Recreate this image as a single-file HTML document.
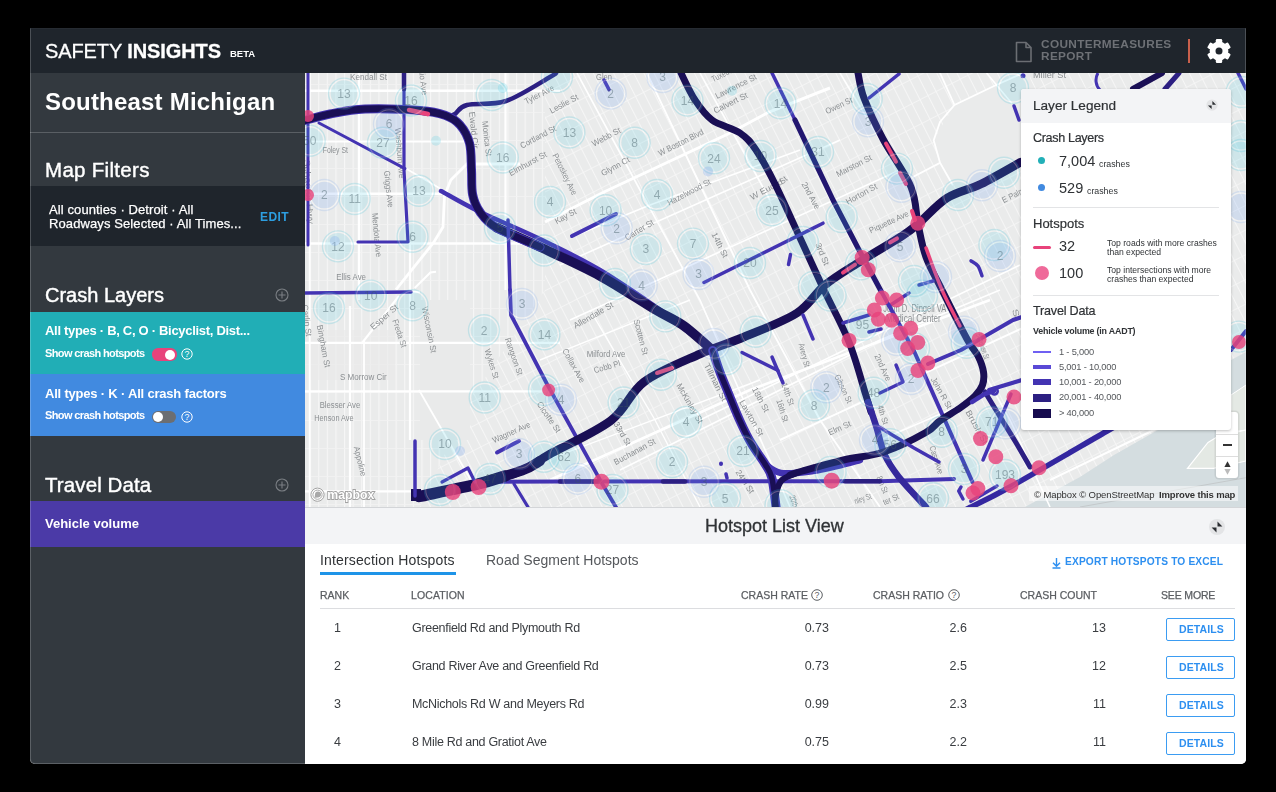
<!DOCTYPE html>
<html><head><meta charset="utf-8">
<style>
*{margin:0;padding:0;box-sizing:border-box}
html,body{width:1276px;height:792px;background:#000;overflow:hidden;font-family:"Liberation Sans",sans-serif}
.abs{position:absolute}
#win{position:absolute;left:30px;top:28px;width:1216px;height:736px;background:#fff;border-radius:0 0 5px 5px;overflow:hidden}
#hdr{position:absolute;left:0;top:0;width:1216px;height:45px;background:#1f252c}
#side{position:absolute;left:0;top:45px;width:275px;height:691px;background:#33393f}
#map{position:absolute;left:275px;top:45px;width:941px;height:434px;background:#e9eaea;overflow:hidden}
#list{position:absolute;left:275px;top:479px;width:941px;height:257px;background:#fff}
.t{position:absolute;white-space:nowrap;line-height:1;will-change:transform}
</style></head><body>
<div id="win">
  <div id="hdr">
    <div class="t" style="left:15px;top:13px;font-size:20px;color:#fff;letter-spacing:-0.1px;-webkit-text-stroke:0.3px #fff">SAFETY <b>INSIGHTS</b></div>
    <div class="t" style="left:200px;top:21px;font-size:9.5px;color:#fff;font-weight:bold">BETA</div>
    <svg class="abs" style="left:985px;top:13px" width="18" height="22" viewBox="0 0 18 22"><path d="M1.5 1.5H11L16 6.5V20.5H1.5Z M11 1.5V6.5H16" fill="none" stroke="#6b6e73" stroke-width="1.6" stroke-linejoin="round"/></svg>
    <div class="t" style="left:1010.5px;top:10px;font-size:11.8px;color:#6e7176;line-height:12px;letter-spacing:0.36px;font-weight:bold">COUNTERMEASURES<br>REPORT</div>
    <div class="abs" style="left:1158px;top:11px;width:1.5px;height:24px;background:#c9604c"></div>
    <svg class="abs" style="left:1173.6px;top:11px" width="30" height="26" viewBox="0 0 30 26"><g transform="translate(15 12)" fill="#fff"><circle r="9.4"/><rect x="-3.2" y="-12" width="6.4" height="24" rx="1.2"/><rect x="-3.2" y="-12" width="6.4" height="24" rx="1.2" transform="rotate(60)"/><rect x="-3.2" y="-12" width="6.4" height="24" rx="1.2" transform="rotate(120)"/><circle r="3.5" fill="#1f252c"/></g></svg>
  </div>
  <div id="side">
    <div class="t" style="left:15px;top:17px;font-size:24px;color:#fff;font-weight:bold;letter-spacing:0.2px">Southeast Michigan</div>
    <div class="abs" style="left:0;top:59px;width:275px;height:1px;background:#5a5f64"></div>
    <div class="t" style="left:15px;top:86.5px;font-size:20.5px;color:#fff;letter-spacing:0.3px;-webkit-text-stroke:0.4px #fff">Map Filters</div>
    <div class="abs" style="left:0;top:113px;width:275px;height:60px;background:#1f252c"></div>
    <div class="t" style="left:19px;top:130px;font-size:13px;color:#fff;line-height:14px;letter-spacing:0.1px;-webkit-text-stroke:0.25px #fff">All counties · Detroit · All<br>Roadways Selected · All Times...</div>
    <div class="t" style="left:230px;top:138px;font-size:12px;color:#2d9ee0;font-weight:bold;letter-spacing:0.4px">EDIT</div>

    <div class="t" style="left:15px;top:212px;font-size:20px;color:#fff;letter-spacing:0px;-webkit-text-stroke:0.4px #fff">Crash Layers</div>
    <svg class="abs" style="left:245px;top:215px" width="14" height="14" viewBox="0 0 14 14"><circle cx="7" cy="7" r="6" fill="none" stroke="#7b7f84" stroke-width="1.1"/><path d="M7 3.5V10.5M3.5 7H10.5" stroke="#7b7f84" stroke-width="1.1"/></svg>

    <div class="abs" style="left:0;top:239px;width:275px;height:62px;background:#21aeb6"></div>
    <div class="t" style="left:15px;top:251px;font-size:13px;color:#fff;font-weight:bold;letter-spacing:-0.3px">All types · B, C, O · Bicyclist, Dist...</div>
    <div class="t" style="left:15px;top:275px;font-size:11px;color:#fff;font-weight:bold;letter-spacing:-0.62px">Show crash hotspots</div>
    <div class="abs" style="left:122.3px;top:275.3px;width:24.5px;height:12.4px;border-radius:6.2px;background:#e8437b"></div>
    <div class="abs" style="left:135.3px;top:276.5px;width:10px;height:10px;border-radius:5px;background:#fff"></div>
    <svg class="abs" style="left:151px;top:275px" width="12" height="12" viewBox="0 0 12 12"><circle cx="6" cy="6" r="5.2" fill="none" stroke="#fff" stroke-width="1"/><text x="6" y="9.1" font-size="8.8" text-anchor="middle" fill="#fff" font-family="Liberation Sans">?</text></svg>

    <div class="abs" style="left:0;top:301px;width:275px;height:62px;background:#418ae0"></div>
    <div class="t" style="left:15px;top:314px;font-size:13px;color:#fff;font-weight:bold;letter-spacing:-0.2px">All types · K · All crash factors</div>
    <div class="t" style="left:15px;top:337px;font-size:11px;color:#fff;font-weight:bold;letter-spacing:-0.62px">Show crash hotspots</div>
    <div class="abs" style="left:122px;top:338px;width:24px;height:12px;border-radius:6px;background:#6c6e71"></div>
    <div class="abs" style="left:123px;top:339px;width:10px;height:10px;border-radius:5px;background:#fff"></div>
    <svg class="abs" style="left:151px;top:338px" width="12" height="12" viewBox="0 0 12 12"><circle cx="6" cy="6" r="5.2" fill="none" stroke="#fff" stroke-width="1"/><text x="6" y="9.1" font-size="8.8" text-anchor="middle" fill="#fff" font-family="Liberation Sans">?</text></svg>

    <div class="t" style="left:15px;top:402px;font-size:20.5px;color:#fff;letter-spacing:0.1px;-webkit-text-stroke:0.4px #fff">Travel Data</div>
    <svg class="abs" style="left:245px;top:405px" width="14" height="14" viewBox="0 0 14 14"><circle cx="7" cy="7" r="6" fill="none" stroke="#7b7f84" stroke-width="1.1"/><path d="M7 3.5V10.5M3.5 7H10.5" stroke="#7b7f84" stroke-width="1.1"/></svg>
    <div class="abs" style="left:0;top:428px;width:275px;height:46px;background:#4b3aa7"></div>
    <div class="t" style="left:15px;top:444px;font-size:13px;color:#fff;font-weight:bold">Vehicle volume</div>
  </div>
  <div id="map">
    <svg id="mapsvg" class="abs" style="left:0;top:0;will-change:transform" width="941" height="434" viewBox="305 73 941 434">
<g clip-path="url(#mc)">
<rect x="305" y="73" width="941" height="434" fill="#eaebeb"/>
<defs>
<pattern id="g1" width="8.6" height="28" patternUnits="userSpaceOnUse"><path d="M0.5 0V28" stroke="#f6f6f6" stroke-width="1.1"/><path d="M0 0.5H8.6" stroke="#f3f3f3" stroke-width="0.8"/></pattern>
<pattern id="g2" width="9" height="22" patternUnits="userSpaceOnUse" patternTransform="rotate(-27)"><path d="M0.5 0V22" stroke="#f6f6f6" stroke-width="1"/><path d="M0 0.5H9" stroke="#f6f6f6" stroke-width="0.8"/></pattern>
<pattern id="g3" width="20" height="9" patternUnits="userSpaceOnUse" patternTransform="rotate(-27)"><path d="M0 0.5H20" stroke="#f6f6f6" stroke-width="1"/><path d="M0.5 0V9" stroke="#f6f6f6" stroke-width="0.8"/></pattern>
<clipPath id="mc"><rect x="305" y="73" width="941" height="434"/></clipPath>
</defs>
<path d="M305 73 L545 73 L545 290 L470 400 L420 507 L305 507 Z" fill="url(#g1)"/>
<path d="M545 73 L1246 73 L1246 507 L420 507 L470 400 L545 290 Z" fill="url(#g2)"/>
<path d="M420 300 L470 300 L470 440 L420 440 Z" fill="#e9eaea"/>
<path d="M954.5 105 L994.6 85.8 L1030 70 L1030 165 L985 185 L952.9 185.2 L940 162.7 L933.7 140.3 Z" fill="#eaebeb"/>
<path d="M305 330 L395 330 L395 380 L305 380 Z" fill="#e9eaea" opacity="0.6"/>
<path d="M1025 507 L1080 477 L1114 455 L1158 430 L1175 420 L1231 420 L1231 360 L1246 352 L1246 507 Z" fill="#d4dde0"/>
<path d="M1231 395 L1246 385 L1246 430 L1231 432 Z" fill="#e4e9e4" stroke="#fff" stroke-width="1"/>
<path d="M1187.5 468.4 L1208 442.5 L1217 437 L1246 430 L1246 461 L1213.4 468.4 Z" fill="#e4e9e4" stroke="#fff" stroke-width="1.2"/>
<path d="M1080 507 L1246 477.7" stroke="#c4c9cb" stroke-width="1"/>
<path d="M305.0 90.8 L560.0 90.8" stroke="#ffffff" stroke-width="2.4" fill="none"/>
<path d="M305.0 141.7 L470.0 141.7" stroke="#ffffff" stroke-width="1.8" fill="none"/>
<path d="M305.0 193.8 L445.0 193.8" stroke="#ffffff" stroke-width="2.6" fill="none"/>
<path d="M305.0 243.5 L555.0 243.5" stroke="#ffffff" stroke-width="2.6" fill="none"/>
<path d="M305.0 292.0 L420.0 292.0" stroke="#ffffff" stroke-width="2.4" fill="none"/>
<path d="M305.0 342.8 L560.0 342.8" stroke="#ffffff" stroke-width="2.2" fill="none"/>
<path d="M305.0 391.4 L560.0 391.4" stroke="#ffffff" stroke-width="2.4" fill="none"/>
<path d="M305.0 491.4 L420.0 491.4" stroke="#ffffff" stroke-width="2.2" fill="none"/>
<path d="M309.7 73.0 L309.7 507.0" stroke="#ffffff" stroke-width="1.8" fill="none"/>
<path d="M359.0 73.0 L359.0 300.0" stroke="#ffffff" stroke-width="2.4" fill="none"/>
<path d="M350.0 306.0 L350.0 507.0" stroke="#ffffff" stroke-width="2.2" fill="none"/>
<path d="M364.0 340.0 L364.0 507.0" stroke="#ffffff" stroke-width="1.8" fill="none"/>
<path d="M410.0 242.0 L410.0 440.0" stroke="#ffffff" stroke-width="2.2" fill="none"/>
<path d="M505.5 73.0 L505.5 290.0" stroke="#ffffff" stroke-width="2.2" fill="none"/>
<path d="M419.0 390.0 L472.0 482.0" stroke="#ffffff" stroke-width="1.8" fill="none"/>
<path d="M362.0 343.0 L399.0 296.0" stroke="#ffffff" stroke-width="2.2" fill="none"/>
<path d="M396.0 289.7 L433.5 242.7 L443.0 227.0 L444.5 195.7 L450.8 180.0 L467.0 164.0 L520.0 164.0" stroke="#ffffff" stroke-width="2.8" fill="none"/>
<path d="M414.7 288.0 L430.4 272.5 L436.0 271.7" stroke="#ffffff" stroke-width="2" fill="none"/>
<path d="M320.0 123.0 L405.0 168.0 L441.0 189.0 L470.0 206.0" stroke="#ffffff" stroke-width="1.8" fill="none"/>
<path d="M545.0 222.0 L604.0 192.0 L728.0 134.0 L769.0 112.0 L830.0 88.0" stroke="#ffffff" stroke-width="3" fill="none"/>
<path d="M572.0 237.0 L650.0 205.0 L800.0 150.0" stroke="#ffffff" stroke-width="1.8" fill="none"/>
<path d="M560.0 265.0 L840.0 140.0" stroke="#ffffff" stroke-width="1.6" fill="none"/>
<path d="M570.0 320.0 L900.0 170.0" stroke="#ffffff" stroke-width="1.6" fill="none"/>
<path d="M550.0 480.0 L750.0 390.0 L990.0 300.0" stroke="#ffffff" stroke-width="2.6" fill="none"/>
<path d="M620.0 470.0 L880.0 340.0 L1000.0 290.0" stroke="#ffffff" stroke-width="1.6" fill="none"/>
<path d="M700.0 420.0 L1020.0 265.0" stroke="#ffffff" stroke-width="1.6" fill="none"/>
<path d="M780.0 440.0 L1040.0 320.0" stroke="#ffffff" stroke-width="2" fill="none"/>
<path d="M880.0 440.0 L1020.0 380.0" stroke="#ffffff" stroke-width="1.6" fill="none"/>
<path d="M647.0 73.0 L750.0 290.0 L820.0 420.0 L880.0 507.0" stroke="#ffffff" stroke-width="1.8" fill="none"/>
<path d="M577.0 73.0 L640.0 190.0 L700.0 300.0 L790.0 507.0" stroke="#ffffff" stroke-width="1.6" fill="none"/>
<path d="M700.0 73.0 L770.0 200.0" stroke="#ffffff" stroke-width="1.6" fill="none"/>
<path d="M840.0 73.0 L880.0 140.0" stroke="#ffffff" stroke-width="1.6" fill="none"/>
<path d="M952.9 185.2 L940.0 162.7 L933.7 140.3 L940.0 122.0 L954.5 105.0 L994.6 85.8 L1030.0 70.0" stroke="#ffffff" stroke-width="1.8" fill="none"/>
<path d="M940.0 73.0 L954.5 105.0" stroke="#ffffff" stroke-width="1.8" fill="none"/>
<path d="M986.5 73.0 L1012.0 103.4" stroke="#ffffff" stroke-width="1.6" fill="none"/>
<path d="M940.0 162.7 L912.8 177.0" stroke="#ffffff" stroke-width="1.6" fill="none"/>
<path d="M960.0 330.0 L1010.0 420.0 L1050.0 507.0" stroke="#ffffff" stroke-width="1.6" fill="none"/>
<path d="M1050.0 480.0 L1158.0 428.0" stroke="#ffffff" stroke-width="2" fill="none"/>
<path d="M590.0 310.0 L655.0 420.0 L700.0 507.0" stroke="#ffffff" stroke-width="1.4" fill="none"/>
<path d="M540.0 360.0 L690.0 300.0" stroke="#ffffff" stroke-width="1.4" fill="none"/>
<path d="M520.0 470.0 L760.0 380.0" stroke="#ffffff" stroke-width="1.4" fill="none"/>
<text x="350.0" y="80.4" font-size="8.5" fill="#8b8f92" font-family="Liberation Sans" textLength="37.0" lengthAdjust="spacingAndGlyphs">Kendall St</text>
<text x="322.7" y="153.3" font-size="8.5" fill="#8b8f92" font-family="Liberation Sans" textLength="25.3" lengthAdjust="spacingAndGlyphs">Foley St</text>
<text x="336.3" y="280.0" font-size="8.5" fill="#8b8f92" font-family="Liberation Sans" textLength="29.7" lengthAdjust="spacingAndGlyphs">Ellis Ave</text>
<text x="1033.0" y="78.0" font-size="8.5" fill="#8b8f92" font-family="Liberation Sans" textLength="33.0" lengthAdjust="spacingAndGlyphs">Miller St</text>
<text x="398.0" y="128.0" font-size="8.5" fill="#8b8f92" font-family="Liberation Sans" dominant-baseline="central" textLength="50.2" lengthAdjust="spacingAndGlyphs" transform="rotate(85.4 398.0 128.0)">Washburn Ave</text>
<text x="387.0" y="170.6" font-size="8.5" fill="#8b8f92" font-family="Liberation Sans" dominant-baseline="central" textLength="37.0" lengthAdjust="spacingAndGlyphs" transform="rotate(83.8 387.0 170.6)">Griggs Ave</text>
<text x="375.0" y="213.0" font-size="8.5" fill="#8b8f92" font-family="Liberation Sans" dominant-baseline="central" textLength="44.2" lengthAdjust="spacingAndGlyphs" transform="rotate(84.8 375.0 213.0)">Mendota Ave</text>
<text x="421.0" y="63.0" font-size="8.5" fill="#8b8f92" font-family="Liberation Sans" dominant-baseline="central" textLength="32.2" lengthAdjust="spacingAndGlyphs" transform="rotate(82.9 421.0 63.0)">Ohio Ave</text>
<text x="472.0" y="111.7" font-size="8.5" fill="#8b8f92" font-family="Liberation Sans" dominant-baseline="central" textLength="37.0" lengthAdjust="spacingAndGlyphs" transform="rotate(83.8 472.0 111.7)">Ewald Cir</text>
<text x="485.0" y="121.0" font-size="8.5" fill="#8b8f92" font-family="Liberation Sans" dominant-baseline="central" textLength="35.2" lengthAdjust="spacingAndGlyphs" transform="rotate(83.5 485.0 121.0)">Monica St</text>
<text x="307.0" y="159.5" font-size="8.5" fill="#8b8f92" font-family="Liberation Sans" dominant-baseline="central" textLength="64.6" lengthAdjust="spacingAndGlyphs" transform="rotate(86.5 307.0 159.5)">Schaefer Hwy</text>
<text x="525.0" y="101.8" font-size="8.5" fill="#8b8f92" font-family="Liberation Sans" dominant-baseline="central" textLength="32.2" lengthAdjust="spacingAndGlyphs" transform="rotate(-27.2 525.0 101.8)">Tyler Ave</text>
<text x="550.0" y="111.0" font-size="8.5" fill="#8b8f92" font-family="Liberation Sans" dominant-baseline="central" textLength="31.3" lengthAdjust="spacingAndGlyphs" transform="rotate(-28.0 550.0 111.0)">Leslie St</text>
<text x="520.5" y="146.0" font-size="8.5" fill="#8b8f92" font-family="Liberation Sans" dominant-baseline="central" textLength="39.5" lengthAdjust="spacingAndGlyphs" transform="rotate(-27.9 520.5 146.0)">Cortland St</text>
<text x="509.4" y="173.5" font-size="8.5" fill="#8b8f92" font-family="Liberation Sans" dominant-baseline="central" textLength="41.7" lengthAdjust="spacingAndGlyphs" transform="rotate(-28.7 509.4 173.5)">Elmhurst St</text>
<text x="555.0" y="154.0" font-size="8.5" fill="#8b8f92" font-family="Liberation Sans" dominant-baseline="central" textLength="45.2" lengthAdjust="spacingAndGlyphs" transform="rotate(63.7 555.0 154.0)">Petoskey Ave</text>
<text x="592.3" y="144.2" font-size="8.5" fill="#8b8f92" font-family="Liberation Sans" dominant-baseline="central" textLength="31.4" lengthAdjust="spacingAndGlyphs" transform="rotate(-28.0 592.3 144.2)">Webb St</text>
<text x="601.5" y="173.5" font-size="8.5" fill="#8b8f92" font-family="Liberation Sans" dominant-baseline="central" textLength="31.1" lengthAdjust="spacingAndGlyphs" transform="rotate(-28.0 601.5 173.5)">Glynn Ct</text>
<text x="658.6" y="153.5" font-size="8.5" fill="#8b8f92" font-family="Liberation Sans" dominant-baseline="central" textLength="49.5" lengthAdjust="spacingAndGlyphs" transform="rotate(-26.7 658.6 153.5)">W Boston Blvd</text>
<text x="667.8" y="203.1" font-size="8.5" fill="#8b8f92" font-family="Liberation Sans" dominant-baseline="central" textLength="47.6" lengthAdjust="spacingAndGlyphs" transform="rotate(-27.6 667.8 203.1)">Hazelwood St</text>
<text x="555.4" y="221.5" font-size="8.5" fill="#8b8f92" font-family="Liberation Sans" dominant-baseline="central" textLength="23.1" lengthAdjust="spacingAndGlyphs" transform="rotate(-28.5 555.4 221.5)">Kay St</text>
<text x="625.4" y="238.1" font-size="8.5" fill="#8b8f92" font-family="Liberation Sans" dominant-baseline="central" textLength="32.2" lengthAdjust="spacingAndGlyphs" transform="rotate(-31.0 625.4 238.1)">Carter St</text>
<text x="714.0" y="233.0" font-size="8.5" fill="#8b8f92" font-family="Liberation Sans" dominant-baseline="central" textLength="26.8" lengthAdjust="spacingAndGlyphs" transform="rotate(63.4 714.0 233.0)">14th St</text>
<text x="750.7" y="197.5" font-size="8.5" fill="#8b8f92" font-family="Liberation Sans" dominant-baseline="central" textLength="35.4" lengthAdjust="spacingAndGlyphs" transform="rotate(-27.8 750.7 197.5)">W Euclid</text>
<text x="715.7" y="96.3" font-size="8.5" fill="#8b8f92" font-family="Liberation Sans" dominant-baseline="central" textLength="45.1" lengthAdjust="spacingAndGlyphs" transform="rotate(-26.7 715.7 96.3)">Lawrence St</text>
<text x="713.8" y="111.0" font-size="8.5" fill="#8b8f92" font-family="Liberation Sans" dominant-baseline="central" textLength="37.1" lengthAdjust="spacingAndGlyphs" transform="rotate(-26.4 713.8 111.0)">Calvert St</text>
<text x="712.0" y="79.5" font-size="8.5" fill="#8b8f92" font-family="Liberation Sans" dominant-baseline="central" textLength="22.4" lengthAdjust="spacingAndGlyphs" transform="rotate(-26.6 712.0 79.5)">Tuxedo</text>
<text x="596.0" y="80.4" font-size="8.5" fill="#8b8f92" font-family="Liberation Sans" textLength="16.0" lengthAdjust="spacingAndGlyphs">Glen</text>
<text x="825.7" y="111.5" font-size="8.5" fill="#8b8f92" font-family="Liberation Sans" dominant-baseline="central" textLength="28.8" lengthAdjust="spacingAndGlyphs" transform="rotate(-25.1 825.7 111.5)">Owen St</text>
<text x="836.7" y="174.5" font-size="8.5" fill="#8b8f92" font-family="Liberation Sans" dominant-baseline="central" textLength="38.6" lengthAdjust="spacingAndGlyphs" transform="rotate(-27.3 836.7 174.5)">Marston St</text>
<text x="846.3" y="202.1" font-size="8.5" fill="#8b8f92" font-family="Liberation Sans" dominant-baseline="central" textLength="34.4" lengthAdjust="spacingAndGlyphs" transform="rotate(-28.9 846.3 202.1)">Horton St</text>
<text x="869.6" y="230.9" font-size="8.5" fill="#8b8f92" font-family="Liberation Sans" dominant-baseline="central" textLength="42.4" lengthAdjust="spacingAndGlyphs" transform="rotate(-25.0 869.6 230.9)">Piquette Ave</text>
<text x="1002.5" y="200.5" font-size="8.5" fill="#8b8f92" font-family="Liberation Sans" dominant-baseline="central" textLength="30.9" lengthAdjust="spacingAndGlyphs" transform="rotate(-27.0 1002.5 200.5)">E Palmer</text>
<text x="804.0" y="182.6" font-size="8.5" fill="#8b8f92" font-family="Liberation Sans" dominant-baseline="central" textLength="29.6" lengthAdjust="spacingAndGlyphs" transform="rotate(61.8 804.0 182.6)">2nd Ave</text>
<text x="818.0" y="243.0" font-size="8.5" fill="#8b8f92" font-family="Liberation Sans" dominant-baseline="central" textLength="23.8" lengthAdjust="spacingAndGlyphs" transform="rotate(67.8 818.0 243.0)">3rd St</text>
<text x="801.3" y="343.5" font-size="8.5" fill="#8b8f92" font-family="Liberation Sans" dominant-baseline="central" textLength="24.1" lengthAdjust="spacingAndGlyphs" transform="rotate(74.9 801.3 343.5)">Avery St</text>
<text x="837.0" y="375.0" font-size="8.5" fill="#8b8f92" font-family="Liberation Sans" dominant-baseline="central" textLength="30.3" lengthAdjust="spacingAndGlyphs" transform="rotate(64.6 837.0 375.0)">Gibson St</text>
<text x="877.0" y="354.4" font-size="8.5" fill="#8b8f92" font-family="Liberation Sans" dominant-baseline="central" textLength="28.7" lengthAdjust="spacingAndGlyphs" transform="rotate(65.3 877.0 354.4)">2nd Ave</text>
<text x="880.0" y="405.0" font-size="8.5" fill="#8b8f92" font-family="Liberation Sans" dominant-baseline="central" textLength="20.2" lengthAdjust="spacingAndGlyphs" transform="rotate(72.7 880.0 405.0)">4th St</text>
<text x="828.5" y="432.8" font-size="8.5" fill="#8b8f92" font-family="Liberation Sans" dominant-baseline="central" textLength="23.9" lengthAdjust="spacingAndGlyphs" transform="rotate(-23.7 828.5 432.8)">Elm St</text>
<text x="933.0" y="377.7" font-size="8.5" fill="#8b8f92" font-family="Liberation Sans" dominant-baseline="central" textLength="34.7" lengthAdjust="spacingAndGlyphs" transform="rotate(60.6 933.0 377.7)">John R St</text>
<text x="968.0" y="410.6" font-size="8.5" fill="#8b8f92" font-family="Liberation Sans" dominant-baseline="central" textLength="37.5" lengthAdjust="spacingAndGlyphs" transform="rotate(61.3 968.0 410.6)">Brush St</text>
<text x="932.0" y="446.0" font-size="8.5" fill="#8b8f92" font-family="Liberation Sans" dominant-baseline="central" textLength="29.1" lengthAdjust="spacingAndGlyphs" transform="rotate(72.0 932.0 446.0)">Cass Ave</text>
<text x="879.0" y="476.4" font-size="8.5" fill="#8b8f92" font-family="Liberation Sans" dominant-baseline="central" textLength="17.8" lengthAdjust="spacingAndGlyphs" transform="rotate(66.9 879.0 476.4)">8th St</text>
<text x="883.3" y="312.0" font-size="10" fill="#8b8f92" font-family="Liberation Sans" textLength="63.0" lengthAdjust="spacingAndGlyphs">John D. Dingell VA</text>
<text x="886.0" y="322.3" font-size="10" fill="#8b8f92" font-family="Liberation Sans" textLength="54.8" lengthAdjust="spacingAndGlyphs">Medical Center</text>
<text x="779.0" y="399.6" font-size="8.5" fill="#8b8f92" font-family="Liberation Sans" dominant-baseline="central" textLength="23.1" lengthAdjust="spacingAndGlyphs" transform="rotate(72.3 779.0 399.6)">16th St</text>
<text x="784.0" y="383.2" font-size="8.5" fill="#8b8f92" font-family="Liberation Sans" dominant-baseline="central" textLength="23.2" lengthAdjust="spacingAndGlyphs" transform="rotate(69.8 784.0 383.2)">14th St</text>
<text x="1015.0" y="309.0" font-size="8.5" fill="#8b8f92" font-family="Liberation Sans" dominant-baseline="central" textLength="11.4" lengthAdjust="spacingAndGlyphs" transform="rotate(74.7 1015.0 309.0)">St</text>
<text x="979.0" y="333.9" font-size="8.5" fill="#8b8f92" font-family="Liberation Sans" dominant-baseline="central" textLength="25.9" lengthAdjust="spacingAndGlyphs" transform="rotate(72.0 979.0 333.9)">Beaubien St</text>
<text x="854.5" y="501.3" font-size="8.5" fill="#8b8f92" font-family="Liberation Sans" dominant-baseline="central" textLength="17.4" lengthAdjust="spacingAndGlyphs" transform="rotate(-18.4 854.5 501.3)">nley St</text>
<text x="883.3" y="502.5" font-size="8.5" fill="#8b8f92" font-family="Liberation Sans" dominant-baseline="central" textLength="16.5" lengthAdjust="spacingAndGlyphs" transform="rotate(-23.9 883.3 502.5)">ter St</text>
<text x="792.0" y="495.6" font-size="8.5" fill="#8b8f92" font-family="Liberation Sans" dominant-baseline="central" textLength="12.1" lengthAdjust="spacingAndGlyphs" transform="rotate(70.7 792.0 495.6)">20th</text>
<text x="780.5" y="182.5" font-size="8.5" fill="#8b8f92" font-family="Liberation Sans" dominant-baseline="central" textLength="7.4" lengthAdjust="spacingAndGlyphs" transform="rotate(-42.3 780.5 182.5)">St</text>
<text x="305.0" y="304.7" font-size="8.5" fill="#8b8f92" font-family="Liberation Sans" dominant-baseline="central" textLength="31.6" lengthAdjust="spacingAndGlyphs" transform="rotate(82.7 305.0 304.7)">Carlin St</text>
<text x="319.7" y="325.0" font-size="8.5" fill="#8b8f92" font-family="Liberation Sans" dominant-baseline="central" textLength="43.1" lengthAdjust="spacingAndGlyphs" transform="rotate(79.2 319.7 325.0)">Bingham St</text>
<text x="371.3" y="328.0" font-size="8.5" fill="#8b8f92" font-family="Liberation Sans" dominant-baseline="central" textLength="33.9" lengthAdjust="spacingAndGlyphs" transform="rotate(-40.7 371.3 328.0)">Esper St</text>
<text x="395.2" y="319.5" font-size="8.5" fill="#8b8f92" font-family="Liberation Sans" dominant-baseline="central" textLength="29.0" lengthAdjust="spacingAndGlyphs" transform="rotate(71.5 395.2 319.5)">Freda St</text>
<text x="424.7" y="306.6" font-size="8.5" fill="#8b8f92" font-family="Liberation Sans" dominant-baseline="central" textLength="46.9" lengthAdjust="spacingAndGlyphs" transform="rotate(78.6 424.7 306.6)">Wisconsin St</text>
<text x="487.3" y="349.0" font-size="8.5" fill="#8b8f92" font-family="Liberation Sans" dominant-baseline="central" textLength="30.8" lengthAdjust="spacingAndGlyphs" transform="rotate(72.6 487.3 349.0)">Wykes St</text>
<text x="507.6" y="337.9" font-size="8.5" fill="#8b8f92" font-family="Liberation Sans" dominant-baseline="central" textLength="39.0" lengthAdjust="spacingAndGlyphs" transform="rotate(70.7 507.6 337.9)">Rangoon St</text>
<text x="573.9" y="326.2" font-size="8.5" fill="#8b8f92" font-family="Liberation Sans" dominant-baseline="central" textLength="44.5" lengthAdjust="spacingAndGlyphs" transform="rotate(-29.8 573.9 326.2)">Allendale St</text>
<text x="636.5" y="319.5" font-size="8.5" fill="#8b8f92" font-family="Liberation Sans" dominant-baseline="central" textLength="36.2" lengthAdjust="spacingAndGlyphs" transform="rotate(75.3 636.5 319.5)">Scotten St</text>
<text x="564.7" y="349.0" font-size="8.5" fill="#8b8f92" font-family="Liberation Sans" dominant-baseline="central" textLength="37.7" lengthAdjust="spacingAndGlyphs" transform="rotate(61.0 564.7 349.0)">Collax Ave</text>
<text x="586.8" y="357.4" font-size="8.5" fill="#8b8f92" font-family="Liberation Sans" textLength="38.6" lengthAdjust="spacingAndGlyphs">Milford Ave</text>
<text x="594.0" y="370.4" font-size="8.5" fill="#8b8f92" font-family="Liberation Sans" dominant-baseline="central" textLength="27.0" lengthAdjust="spacingAndGlyphs" transform="rotate(-15.9 594.0 370.4)">Cobb Pl</text>
<text x="340.0" y="380.2" font-size="8.5" fill="#8b8f92" font-family="Liberation Sans" textLength="46.8" lengthAdjust="spacingAndGlyphs">S Morrow Cir</text>
<text x="319.7" y="407.9" font-size="8.5" fill="#8b8f92" font-family="Liberation Sans" textLength="40.5" lengthAdjust="spacingAndGlyphs">Blesser Ave</text>
<text x="314.2" y="420.8" font-size="8.5" fill="#8b8f92" font-family="Liberation Sans" textLength="39.4" lengthAdjust="spacingAndGlyphs">Henson Ave</text>
<text x="356.6" y="446.5" font-size="8.5" fill="#8b8f92" font-family="Liberation Sans" dominant-baseline="central" textLength="30.4" lengthAdjust="spacingAndGlyphs" transform="rotate(75.9 356.6 446.5)">Appoline</text>
<text x="492.8" y="440.4" font-size="8.5" fill="#8b8f92" font-family="Liberation Sans" dominant-baseline="central" textLength="40.5" lengthAdjust="spacingAndGlyphs" transform="rotate(-24.2 492.8 440.4)">Wagner Ave</text>
<text x="538.9" y="402.3" font-size="8.5" fill="#8b8f92" font-family="Liberation Sans" dominant-baseline="central" textLength="35.7" lengthAdjust="spacingAndGlyphs" transform="rotate(55.7 538.9 402.3)">Cicotte St</text>
<text x="678.8" y="383.9" font-size="8.5" fill="#8b8f92" font-family="Liberation Sans" dominant-baseline="central" textLength="44.6" lengthAdjust="spacingAndGlyphs" transform="rotate(60.2 678.8 383.9)">McKinley St</text>
<text x="616.2" y="422.6" font-size="8.5" fill="#8b8f92" font-family="Liberation Sans" dominant-baseline="central" textLength="25.5" lengthAdjust="spacingAndGlyphs" transform="rotate(59.9 616.2 422.6)">33rd St</text>
<text x="614.4" y="462.5" font-size="8.5" fill="#8b8f92" font-family="Liberation Sans" dominant-baseline="central" textLength="46.1" lengthAdjust="spacingAndGlyphs" transform="rotate(-28.6 614.4 462.5)">Buchanan St</text>
<text x="706.5" y="363.7" font-size="8.5" fill="#8b8f92" font-family="Liberation Sans" dominant-baseline="central" textLength="41.2" lengthAdjust="spacingAndGlyphs" transform="rotate(63.3 706.5 363.7)">Tillman St</text>
<text x="741.5" y="400.5" font-size="8.5" fill="#8b8f92" font-family="Liberation Sans" dominant-baseline="central" textLength="40.4" lengthAdjust="spacingAndGlyphs" transform="rotate(60.0 741.5 400.5)">Lawton St</text>
<text x="754.4" y="387.6" font-size="8.5" fill="#8b8f92" font-family="Liberation Sans" dominant-baseline="central" textLength="27.1" lengthAdjust="spacingAndGlyphs" transform="rotate(61.8 754.4 387.6)">18th St</text>
<text x="737.8" y="470.5" font-size="8.5" fill="#8b8f92" font-family="Liberation Sans" dominant-baseline="central" textLength="26.5" lengthAdjust="spacingAndGlyphs" transform="rotate(56.4 737.8 470.5)">24th St</text>
<path d="M441.0 191.0 C447.2 194.3 461.5 203.0 478.0 211.0 C494.5 219.0 519.7 229.2 540.0 239.0 C560.3 248.8 579.2 257.7 600.0 270.0 C620.8 282.3 654.2 305.8 665.0 313.0" stroke="#4333b2" stroke-width="4.5" fill="none" stroke-linecap="round" stroke-linejoin="round"/>
<path d="M319.0 123.0 L405.0 168.6" stroke="#4333b2" stroke-width="3" fill="none" stroke-linecap="round" stroke-linejoin="round"/>
<path d="M496.5 227.7 C503.8 230.9 522.8 238.9 540.0 247.0 C557.2 255.1 581.0 265.7 600.0 276.0 C619.0 286.3 640.0 300.7 654.0 309.0 C668.0 317.3 674.2 319.1 684.0 326.0 C693.8 332.9 707.9 346.4 712.7 350.5" stroke="#1a0f55" stroke-width="9.5" fill="none" stroke-linecap="round" stroke-linejoin="round"/>
<path d="M447.0 117.0 C448.3 116.5 451.7 116.0 455.0 114.0 C458.3 112.0 458.5 107.2 467.0 105.0 C475.5 102.8 492.2 105.7 506.0 101.0 C519.8 96.3 541.7 81.7 550.0 77.0 C558.3 72.3 555.0 73.7 556.0 73.0" stroke="#2c1f82" stroke-width="4.5" fill="none" stroke-linecap="round" stroke-linejoin="round"/>
<path d="M409.0 110.0 L428.0 114.0" stroke="#e8437b" stroke-width="4.5" fill="none" stroke-linecap="round" stroke-linejoin="round"/>
<path d="M308.0 73.0 L308.0 245.0" stroke="#4333b2" stroke-width="3" fill="none" stroke-linecap="round" stroke-linejoin="round"/>
<path d="M404.0 73.0 L404.0 170.0 L408.0 242.0 L358.0 242.0" stroke="#4333b2" stroke-width="3.2" fill="none" stroke-linecap="round" stroke-linejoin="round"/>
<path d="M404.0 71.0 L404.0 89.0" stroke="#2c1f82" stroke-width="4.5" fill="none" stroke-linecap="round" stroke-linejoin="round"/>
<path d="M303.0 121.0 C307.5 119.8 319.7 116.0 330.0 114.0 C340.3 112.0 350.0 109.6 365.0 109.0 C380.0 108.4 406.7 109.5 420.0 110.6 C433.3 111.6 438.3 112.9 445.0 115.3 C451.7 117.7 455.9 120.3 460.0 125.0 C464.1 129.7 467.7 136.0 469.6 143.5 C471.5 151.0 471.0 161.5 471.5 170.0 C472.0 178.5 471.2 187.5 472.6 194.5 C474.0 201.5 476.0 206.5 480.0 212.0 C484.0 217.5 486.5 221.9 496.5 227.7 C506.5 233.5 532.8 243.8 540.0 247.0" stroke="#4333b2" stroke-width="9" fill="none" stroke-linecap="round" stroke-linejoin="round"/>
<path d="M303.0 121.0 C307.5 119.8 319.7 116.0 330.0 114.0 C340.3 112.0 350.0 109.6 365.0 109.0 C380.0 108.4 406.7 109.5 420.0 110.6 C433.3 111.6 438.3 112.9 445.0 115.3 C451.7 117.7 455.9 120.3 460.0 125.0 C464.1 129.7 467.7 136.0 469.6 143.5 C471.5 151.0 471.0 161.5 471.5 170.0 C472.0 178.5 471.2 187.5 472.6 194.5 C474.0 201.5 476.0 206.5 480.0 212.0 C484.0 217.5 486.5 221.9 496.5 227.7 C506.5 233.5 532.8 243.8 540.0 247.0" stroke="#1a0f55" stroke-width="7.2" fill="none" stroke-linecap="round" stroke-linejoin="round"/>
<path d="M409.0 110.0 L428.0 114.0" stroke="#e8437b" stroke-width="4.5" fill="none" stroke-linecap="round" stroke-linejoin="round"/>
<path d="M305.0 293.0 L411.0 292.0" stroke="#4333b2" stroke-width="3.5" fill="none" stroke-linecap="round" stroke-linejoin="round"/>
<path d="M508.0 220.0 L510.0 290.0" stroke="#4333b2" stroke-width="3.5" fill="none" stroke-linecap="round" stroke-linejoin="round"/>
<path d="M510.0 290.0 L511.0 315.0 L547.0 384.0 L601.0 481.7 L617.0 509.0" stroke="#4333b2" stroke-width="3.8" fill="none" stroke-linecap="round" stroke-linejoin="round"/>
<path d="M494.0 481.7 L767.0 481.2 L880.0 481.2 L954.0 479.0" stroke="#4333b2" stroke-width="4" fill="none" stroke-linecap="round" stroke-linejoin="round"/>
<path d="M560.0 481.5 L600.0 481.5" stroke="#2c1f82" stroke-width="4.5" fill="none" stroke-linecap="round" stroke-linejoin="round"/>
<path d="M663.0 481.5 L685.0 481.5" stroke="#2c1f82" stroke-width="4.5" fill="none" stroke-linecap="round" stroke-linejoin="round"/>
<path d="M845.0 481.2 L880.0 481.2" stroke="#2c1f82" stroke-width="4.5" fill="none" stroke-linecap="round" stroke-linejoin="round"/>
<path d="M417.0 497.0 C427.2 494.8 460.5 488.4 478.0 484.0 C495.5 479.6 510.0 475.5 522.0 470.5 C534.0 465.5 535.2 462.3 550.0 454.0 C564.8 445.7 595.3 432.5 611.0 420.5 C626.7 408.5 629.2 393.1 644.0 382.0 C658.8 370.9 683.3 361.5 700.0 354.0 C716.7 346.5 727.8 343.8 744.0 337.0 C760.2 330.2 783.5 321.7 797.0 313.0 C810.5 304.3 814.3 293.7 825.0 285.0 C835.7 276.3 848.2 269.2 861.0 261.0 C873.8 252.8 892.5 242.2 902.0 236.0 C911.5 229.8 910.5 230.3 918.0 224.0 C925.5 217.7 936.5 204.7 947.0 198.0 C957.5 191.3 968.7 190.0 981.0 184.0 C993.3 178.0 1014.3 165.7 1021.0 162.0" stroke="#1a0f55" stroke-width="8.5" fill="none" stroke-linecap="round" stroke-linejoin="round"/>
<path d="M419.0 496.5 C428.8 494.4 463.7 487.4 478.0 484.0 C492.3 480.6 500.5 477.3 505.0 476.0" stroke="#1a0f55" stroke-width="11.5" fill="none" stroke-linecap="round" stroke-linejoin="round"/>
<path d="M478.0 484.0 C485.3 481.8 511.7 474.3 522.0 470.5 C532.3 466.7 537.0 462.6 540.0 461.0" stroke="#1a0f55" stroke-width="10" fill="none" stroke-linecap="round" stroke-linejoin="round"/>
<rect x="411" y="489" width="10" height="12" fill="#1a0f55"/>
<path d="M415.0 441.0 L415.0 496.0" stroke="#4333b2" stroke-width="3.5" fill="none" stroke-linecap="round" stroke-linejoin="round"/>
<path d="M442.0 482.0 L468.0 468.0 L475.0 482.0" stroke="#4333b2" stroke-width="3.2" fill="none" stroke-linecap="round" stroke-linejoin="round"/>
<path d="M514.0 484.0 L528.0 507.0" stroke="#4333b2" stroke-width="3.2" fill="none" stroke-linecap="round" stroke-linejoin="round"/>
<path d="M497.0 452.5 L519.0 441.0" stroke="#4333b2" stroke-width="4" fill="none" stroke-linecap="round" stroke-linejoin="round"/>
<path d="M657.0 373.0 L672.0 368.0" stroke="#e8437b" stroke-width="4" fill="none" stroke-linecap="round" stroke-linejoin="round"/>
<path d="M765.0 464.0 C767.7 465.5 773.0 471.8 781.0 473.0 C789.0 474.2 803.7 472.2 813.0 471.0 C822.3 469.8 829.2 467.8 837.0 466.0 C844.8 464.2 856.2 461.0 860.0 460.0" stroke="#4333b2" stroke-width="6.5" fill="none" stroke-linecap="round" stroke-linejoin="round"/>
<path d="M712.7 350.5 C713.8 353.9 716.9 363.8 719.5 371.0 C722.1 378.2 725.2 385.3 728.6 393.6 C732.0 401.9 736.2 412.7 740.0 421.0 C743.8 429.3 747.2 436.4 751.4 443.6 C755.6 450.8 761.6 458.3 765.0 464.0 C768.4 469.7 769.9 470.1 771.8 477.7 C773.7 485.3 775.6 504.2 776.4 509.5" stroke="#4333b2" stroke-width="9" fill="none" stroke-linecap="round" stroke-linejoin="round"/>
<path d="M712.7 350.5 C713.8 353.9 716.9 363.8 719.5 371.0 C722.1 378.2 725.2 385.3 728.6 393.6 C732.0 401.9 736.2 412.7 740.0 421.0 C743.8 429.3 747.2 436.4 751.4 443.6 C755.6 450.8 761.6 458.3 765.0 464.0 C768.4 469.7 769.9 470.1 771.8 477.7 C773.7 485.3 775.6 504.2 776.4 509.5" stroke="#1a0f55" stroke-width="5.5" fill="none" stroke-linecap="round" stroke-linejoin="round"/>
<path d="M799.0 472.0 C796.2 473.3 785.8 476.3 782.0 480.0 C778.2 483.7 777.2 489.5 776.0 494.0 C774.8 498.5 775.2 504.8 775.0 507.0" stroke="#1a0f55" stroke-width="6" fill="none" stroke-linecap="round" stroke-linejoin="round"/>
<path d="M681.0 73.0 C683.3 77.5 689.8 92.2 695.0 100.0 C700.2 107.8 704.5 114.5 712.0 120.0 C719.5 125.5 732.7 128.0 740.0 133.0 C747.3 138.0 750.2 141.5 756.0 150.0 C761.8 158.5 767.5 169.0 775.0 184.0 C782.5 199.0 792.8 222.3 801.0 240.0 C809.2 257.7 816.0 273.0 824.0 290.0 C832.0 307.0 842.1 324.7 849.0 342.0 C855.9 359.3 861.8 382.3 865.5 394.0 C869.2 405.7 870.1 409.0 871.0 412.0" stroke="#1a0f55" stroke-width="6.9" fill="none" stroke-linecap="round" stroke-linejoin="round"/>
<path d="M868.0 402.0 C869.4 406.2 873.6 418.2 876.4 427.0 C879.2 435.8 880.9 446.3 884.6 454.5 C888.3 462.7 892.0 468.2 898.4 476.4 C904.8 484.6 918.4 498.7 923.0 503.8 C927.6 508.9 925.5 506.5 926.0 507.0" stroke="#35289c" stroke-width="6.5" fill="none" stroke-linecap="round" stroke-linejoin="round"/>
<path d="M772.0 73.0 L795.0 120.0" stroke="#4333b2" stroke-width="3.5" fill="none" stroke-linecap="round" stroke-linejoin="round"/>
<path d="M795.0 120.0 L833.0 200.0 L859.0 250.0 L881.0 291.0" stroke="#221670" stroke-width="5.2" fill="none" stroke-linecap="round" stroke-linejoin="round"/>
<path d="M881.0 291.0 L914.0 351.0 L972.4 481.9" stroke="#4333b2" stroke-width="4" fill="none" stroke-linecap="round" stroke-linejoin="round"/>
<path d="M858.0 73.0 C859.0 77.2 859.8 87.0 864.0 98.0 C868.2 109.0 875.2 124.2 883.0 139.0 C890.8 153.8 905.2 172.8 911.0 187.0 C916.8 201.2 915.5 212.3 918.0 224.0 C920.5 235.7 922.0 246.0 926.0 257.0 C930.0 268.0 935.2 276.3 942.0 290.0 C948.8 303.7 961.0 328.0 967.0 339.0 C973.0 350.0 975.2 350.5 978.0 356.0 C980.8 361.5 982.8 367.2 983.5 372.0 C984.2 376.8 983.9 381.0 982.5 385.0 C981.1 389.0 978.8 392.2 975.0 396.0 C971.2 399.8 965.8 403.9 960.0 408.0 C954.2 412.1 945.7 416.5 940.0 420.6 C934.3 424.7 935.0 427.3 925.8 432.5 C916.6 437.7 898.3 447.1 884.6 451.7 C870.9 456.3 857.2 456.8 843.5 460.0 C829.8 463.2 811.3 468.5 802.4 471.0 C793.5 473.5 792.1 474.3 790.0 475.0" stroke="#1a0f55" stroke-width="7" fill="none" stroke-linecap="round" stroke-linejoin="round"/>
<path d="M886.0 143.6 L896.0 161.7" stroke="#e8437b" stroke-width="4" fill="none" stroke-linecap="round" stroke-linejoin="round"/>
<path d="M900.0 172.8 L906.0 184.0" stroke="#e8437b" stroke-width="4" fill="none" stroke-linecap="round" stroke-linejoin="round"/>
<path d="M912.0 211.0 L915.0 220.0" stroke="#e8437b" stroke-width="4" fill="none" stroke-linecap="round" stroke-linejoin="round"/>
<path d="M926.0 248.0 C928.7 255.0 936.3 277.0 942.0 290.0 C947.7 303.0 957.0 320.0 960.0 326.0" stroke="#e8437b" stroke-width="3.5" fill="none" stroke-linecap="round" stroke-linejoin="round"/>
<path d="M843.0 272.7 L855.0 264.6" stroke="#e8437b" stroke-width="4" fill="none" stroke-linecap="round" stroke-linejoin="round"/>
<path d="M890.0 242.4 L897.0 238.4" stroke="#e8437b" stroke-width="4" fill="none" stroke-linecap="round" stroke-linejoin="round"/>
<path d="M604.0 80.0 L609.0 89.6" stroke="#4333b2" stroke-width="3.5" fill="none" stroke-linecap="round" stroke-linejoin="round"/>
<path d="M572.0 236.0 L616.0 214.0" stroke="#4333b2" stroke-width="4" fill="none" stroke-linecap="round" stroke-linejoin="round"/>
<path d="M704.0 282.5 L823.0 223.2" stroke="#4333b2" stroke-width="3.5" fill="none" stroke-linecap="round" stroke-linejoin="round"/>
<path d="M790.5 254.5 L788.5 264.6" stroke="#4333b2" stroke-width="3.5" fill="none" stroke-linecap="round" stroke-linejoin="round"/>
<path d="M869.0 98.0 L899.0 74.0" stroke="#4333b2" stroke-width="3.5" fill="none" stroke-linecap="round" stroke-linejoin="round"/>
<path d="M1014.0 106.0 L1019.0 120.0" stroke="#4333b2" stroke-width="3.5" fill="none" stroke-linecap="round" stroke-linejoin="round"/>
<path d="M971.0 260.8 C972.2 261.7 976.2 263.5 978.0 266.0 C979.8 268.5 981.3 274.2 982.0 275.8" stroke="#4333b2" stroke-width="3.5" fill="none" stroke-linecap="round" stroke-linejoin="round"/>
<path d="M919.0 285.0 L933.0 281.0" stroke="#4333b2" stroke-width="3.5" fill="none" stroke-linecap="round" stroke-linejoin="round"/>
<path d="M803.0 315.0 L813.0 339.0" stroke="#4333b2" stroke-width="3.5" fill="none" stroke-linecap="round" stroke-linejoin="round"/>
<path d="M843.0 323.0 L869.0 315.0" stroke="#4333b2" stroke-width="3.5" fill="none" stroke-linecap="round" stroke-linejoin="round"/>
<path d="M869.0 332.0 L881.0 329.0" stroke="#4333b2" stroke-width="3.5" fill="none" stroke-linecap="round" stroke-linejoin="round"/>
<path d="M889.0 306.0 L909.0 293.0" stroke="#4333b2" stroke-width="3.5" fill="none" stroke-linecap="round" stroke-linejoin="round"/>
<path d="M928.0 364.0 L961.0 350.0 L1013.0 320.0 L1022.0 317.0" stroke="#4333b2" stroke-width="4" fill="none" stroke-linecap="round" stroke-linejoin="round"/>
<path d="M896.0 365.0 L903.0 382.0 L880.0 393.0" stroke="#4333b2" stroke-width="3.5" fill="none" stroke-linecap="round" stroke-linejoin="round"/>
<path d="M879.0 427.0 L914.0 448.0 L939.0 462.0" stroke="#4333b2" stroke-width="3.5" fill="none" stroke-linecap="round" stroke-linejoin="round"/>
<path d="M985.0 392.0 C987.3 395.8 994.0 406.8 999.0 415.0 C1004.0 423.2 1009.8 432.3 1015.0 441.0 C1020.2 449.7 1027.5 462.7 1030.0 467.0" stroke="#2c1f82" stroke-width="5" fill="none" stroke-linecap="round" stroke-linejoin="round"/>
<path d="M1011.0 394.0 L983.0 460.0" stroke="#4333b2" stroke-width="3.5" fill="none" stroke-linecap="round" stroke-linejoin="round"/>
<path d="M989.0 390.0 L1022.0 380.0" stroke="#4333b2" stroke-width="4" fill="none" stroke-linecap="round" stroke-linejoin="round"/>
<path d="M972.0 402.0 C974.2 400.7 981.3 395.8 985.0 394.0 C988.7 392.2 992.5 391.5 994.0 391.0" stroke="#4333b2" stroke-width="4.5" fill="none" stroke-linecap="round" stroke-linejoin="round"/>
<circle cx="994.5" cy="391.3" r="3.2" fill="none" stroke="#4333b2" stroke-width="2.6"/>
<path d="M742.0 352.5 L778.0 370.5" stroke="#4333b2" stroke-width="3.5" fill="none" stroke-linecap="round" stroke-linejoin="round"/>
<path d="M772.0 357.0 L783.0 383.0" stroke="#4333b2" stroke-width="3.5" fill="none" stroke-linecap="round" stroke-linejoin="round"/>
<path d="M721.0 463.6 L721.0 464.0" stroke="#4333b2" stroke-width="4" fill="none" stroke-linecap="round" stroke-linejoin="round"/>
<path d="M726.0 474.0 L727.0 478.0" stroke="#4333b2" stroke-width="3.5" fill="none" stroke-linecap="round" stroke-linejoin="round"/>
<path d="M961.0 487.0 L958.7 491.0 L963.0 499.0" stroke="#4333b2" stroke-width="3.5" fill="none" stroke-linecap="round" stroke-linejoin="round"/>
<path d="M970.8 501.3 L997.0 486.0" stroke="#4333b2" stroke-width="3.5" fill="none" stroke-linecap="round" stroke-linejoin="round"/>
<path d="M967.0 509.0 C974.2 505.3 986.5 500.1 1010.0 487.0 C1033.5 473.9 1088.0 442.0 1108.0 430.5 C1128.0 419.0 1126.3 420.1 1130.0 418.0" stroke="#3427a0" stroke-width="5.5" fill="none" stroke-linecap="round" stroke-linejoin="round"/>
<path d="M1231.0 350.0 L1246.0 331.0" stroke="#4333b2" stroke-width="4" fill="none" stroke-linecap="round" stroke-linejoin="round"/>
<path d="M1133.0 89.0 L1162.0 73.0" stroke="#1a0f55" stroke-width="6" fill="none" stroke-linecap="round" stroke-linejoin="round"/>
<path d="M1165.0 89.0 L1179.0 73.0" stroke="#2c1f82" stroke-width="5" fill="none" stroke-linecap="round" stroke-linejoin="round"/>
<path d="M1238.0 73.0 L1246.0 89.0" stroke="#4333b2" stroke-width="3.5" fill="none" stroke-linecap="round" stroke-linejoin="round"/>
<path d="M1098 73 A14 14 0 0 0 1100 90" stroke="#4333b2" stroke-width="3" fill="none"/>
<circle cx="1023" cy="75.7" r="2.5" fill="#4333b2"/>
<circle cx="344" cy="93.6" r="13.3" fill="rgba(60,201,227,0.16)"/><circle cx="344" cy="93.6" r="14.200000000000001" fill="none" stroke="rgba(255,255,255,0.3)" stroke-width="1.2"/><circle cx="344" cy="93.6" r="15.5" fill="none" stroke="rgba(60,190,215,0.22)" stroke-width="1.4"/>
<text x="344" y="97.89999999999999" font-size="12" text-anchor="middle" fill="rgba(60,85,95,0.42)" font-family="Liberation Sans">13</text>
<circle cx="383" cy="142.8" r="13.3" fill="rgba(60,201,227,0.16)"/><circle cx="383" cy="142.8" r="14.200000000000001" fill="none" stroke="rgba(255,255,255,0.3)" stroke-width="1.2"/><circle cx="383" cy="142.8" r="15.5" fill="none" stroke="rgba(60,190,215,0.22)" stroke-width="1.4"/>
<text x="383" y="147.10000000000002" font-size="12" text-anchor="middle" fill="rgba(60,85,95,0.42)" font-family="Liberation Sans">27</text>
<circle cx="309.7" cy="140.8" r="13.3" fill="rgba(60,201,227,0.16)"/><circle cx="309.7" cy="140.8" r="14.200000000000001" fill="none" stroke="rgba(255,255,255,0.3)" stroke-width="1.2"/><circle cx="309.7" cy="140.8" r="15.5" fill="none" stroke="rgba(60,190,215,0.22)" stroke-width="1.4"/>
<text x="309.7" y="145.10000000000002" font-size="12" text-anchor="middle" fill="rgba(60,85,95,0.42)" font-family="Liberation Sans">50</text>
<circle cx="354.7" cy="199" r="13.3" fill="rgba(60,201,227,0.16)"/><circle cx="354.7" cy="199" r="14.200000000000001" fill="none" stroke="rgba(255,255,255,0.3)" stroke-width="1.2"/><circle cx="354.7" cy="199" r="15.5" fill="none" stroke="rgba(60,190,215,0.22)" stroke-width="1.4"/>
<text x="354.7" y="203.3" font-size="12" text-anchor="middle" fill="rgba(60,85,95,0.42)" font-family="Liberation Sans">11</text>
<circle cx="419" cy="190.8" r="13.3" fill="rgba(60,201,227,0.16)"/><circle cx="419" cy="190.8" r="14.200000000000001" fill="none" stroke="rgba(255,255,255,0.3)" stroke-width="1.2"/><circle cx="419" cy="190.8" r="15.5" fill="none" stroke="rgba(60,190,215,0.22)" stroke-width="1.4"/>
<text x="419" y="195.10000000000002" font-size="12" text-anchor="middle" fill="rgba(60,85,95,0.42)" font-family="Liberation Sans">13</text>
<circle cx="338" cy="246.4" r="13.3" fill="rgba(60,201,227,0.16)"/><circle cx="338" cy="246.4" r="14.200000000000001" fill="none" stroke="rgba(255,255,255,0.3)" stroke-width="1.2"/><circle cx="338" cy="246.4" r="15.5" fill="none" stroke="rgba(60,190,215,0.22)" stroke-width="1.4"/>
<text x="338" y="250.70000000000002" font-size="12" text-anchor="middle" fill="rgba(60,85,95,0.42)" font-family="Liberation Sans">12</text>
<circle cx="412.5" cy="236.7" r="13.3" fill="rgba(60,201,227,0.16)"/><circle cx="412.5" cy="236.7" r="14.200000000000001" fill="none" stroke="rgba(255,255,255,0.3)" stroke-width="1.2"/><circle cx="412.5" cy="236.7" r="15.5" fill="none" stroke="rgba(60,190,215,0.22)" stroke-width="1.4"/>
<text x="412.5" y="241.0" font-size="12" text-anchor="middle" fill="rgba(60,85,95,0.42)" font-family="Liberation Sans">6</text>
<circle cx="502.8" cy="157.5" r="13.3" fill="rgba(60,201,227,0.16)"/><circle cx="502.8" cy="157.5" r="14.200000000000001" fill="none" stroke="rgba(255,255,255,0.3)" stroke-width="1.2"/><circle cx="502.8" cy="157.5" r="15.5" fill="none" stroke="rgba(60,190,215,0.22)" stroke-width="1.4"/>
<text x="502.8" y="161.8" font-size="12" text-anchor="middle" fill="rgba(60,85,95,0.42)" font-family="Liberation Sans">16</text>
<circle cx="491.7" cy="95" r="13.3" fill="rgba(60,201,227,0.16)"/><circle cx="491.7" cy="95" r="14.200000000000001" fill="none" stroke="rgba(255,255,255,0.3)" stroke-width="1.2"/><circle cx="491.7" cy="95" r="15.5" fill="none" stroke="rgba(60,190,215,0.22)" stroke-width="1.4"/>
<circle cx="500" cy="228" r="13.3" fill="rgba(60,201,227,0.16)"/><circle cx="500" cy="228" r="14.200000000000001" fill="none" stroke="rgba(255,255,255,0.3)" stroke-width="1.2"/><circle cx="500" cy="228" r="15.5" fill="none" stroke="rgba(60,190,215,0.22)" stroke-width="1.4"/>
<text x="500" y="232.3" font-size="12" text-anchor="middle" fill="rgba(60,85,95,0.42)" font-family="Liberation Sans">5</text>
<circle cx="544" cy="250.5" r="13.3" fill="rgba(60,201,227,0.16)"/><circle cx="544" cy="250.5" r="14.200000000000001" fill="none" stroke="rgba(255,255,255,0.3)" stroke-width="1.2"/><circle cx="544" cy="250.5" r="15.5" fill="none" stroke="rgba(60,190,215,0.22)" stroke-width="1.4"/>
<circle cx="411" cy="100.5" r="13.3" fill="rgba(60,201,227,0.16)"/><circle cx="411" cy="100.5" r="14.200000000000001" fill="none" stroke="rgba(255,255,255,0.3)" stroke-width="1.2"/><circle cx="411" cy="100.5" r="15.5" fill="none" stroke="rgba(60,190,215,0.22)" stroke-width="1.4"/>
<text x="411" y="104.8" font-size="12" text-anchor="middle" fill="rgba(60,85,95,0.42)" font-family="Liberation Sans">16</text>
<circle cx="329" cy="308" r="13.3" fill="rgba(60,201,227,0.16)"/><circle cx="329" cy="308" r="14.200000000000001" fill="none" stroke="rgba(255,255,255,0.3)" stroke-width="1.2"/><circle cx="329" cy="308" r="15.5" fill="none" stroke="rgba(60,190,215,0.22)" stroke-width="1.4"/>
<text x="329" y="312.3" font-size="12" text-anchor="middle" fill="rgba(60,85,95,0.42)" font-family="Liberation Sans">16</text>
<circle cx="370.8" cy="295.6" r="13.3" fill="rgba(60,201,227,0.16)"/><circle cx="370.8" cy="295.6" r="14.200000000000001" fill="none" stroke="rgba(255,255,255,0.3)" stroke-width="1.2"/><circle cx="370.8" cy="295.6" r="15.5" fill="none" stroke="rgba(60,190,215,0.22)" stroke-width="1.4"/>
<text x="370.8" y="299.90000000000003" font-size="12" text-anchor="middle" fill="rgba(60,85,95,0.42)" font-family="Liberation Sans">10</text>
<circle cx="412.5" cy="305.3" r="13.3" fill="rgba(60,201,227,0.16)"/><circle cx="412.5" cy="305.3" r="14.200000000000001" fill="none" stroke="rgba(255,255,255,0.3)" stroke-width="1.2"/><circle cx="412.5" cy="305.3" r="15.5" fill="none" stroke="rgba(60,190,215,0.22)" stroke-width="1.4"/>
<text x="412.5" y="309.6" font-size="12" text-anchor="middle" fill="rgba(60,85,95,0.42)" font-family="Liberation Sans">8</text>
<circle cx="484" cy="330.3" r="13.3" fill="rgba(60,201,227,0.16)"/><circle cx="484" cy="330.3" r="14.200000000000001" fill="none" stroke="rgba(255,255,255,0.3)" stroke-width="1.2"/><circle cx="484" cy="330.3" r="15.5" fill="none" stroke="rgba(60,190,215,0.22)" stroke-width="1.4"/>
<text x="484" y="334.6" font-size="12" text-anchor="middle" fill="rgba(60,85,95,0.42)" font-family="Liberation Sans">2</text>
<circle cx="544.4" cy="334.4" r="13.3" fill="rgba(60,201,227,0.16)"/><circle cx="544.4" cy="334.4" r="14.200000000000001" fill="none" stroke="rgba(255,255,255,0.3)" stroke-width="1.2"/><circle cx="544.4" cy="334.4" r="15.5" fill="none" stroke="rgba(60,190,215,0.22)" stroke-width="1.4"/>
<text x="544.4" y="338.7" font-size="12" text-anchor="middle" fill="rgba(60,85,95,0.42)" font-family="Liberation Sans">14</text>
<circle cx="484.7" cy="397.5" r="13.3" fill="rgba(60,201,227,0.16)"/><circle cx="484.7" cy="397.5" r="14.200000000000001" fill="none" stroke="rgba(255,255,255,0.3)" stroke-width="1.2"/><circle cx="484.7" cy="397.5" r="15.5" fill="none" stroke="rgba(60,190,215,0.22)" stroke-width="1.4"/>
<text x="484.7" y="401.8" font-size="12" text-anchor="middle" fill="rgba(60,85,95,0.42)" font-family="Liberation Sans">11</text>
<circle cx="445" cy="444" r="13.3" fill="rgba(60,201,227,0.16)"/><circle cx="445" cy="444" r="14.200000000000001" fill="none" stroke="rgba(255,255,255,0.3)" stroke-width="1.2"/><circle cx="445" cy="444" r="15.5" fill="none" stroke="rgba(60,190,215,0.22)" stroke-width="1.4"/>
<text x="445" y="448.3" font-size="12" text-anchor="middle" fill="rgba(60,85,95,0.42)" font-family="Liberation Sans">10</text>
<circle cx="440" cy="490" r="13.3" fill="rgba(60,201,227,0.16)"/><circle cx="440" cy="490" r="14.200000000000001" fill="none" stroke="rgba(255,255,255,0.3)" stroke-width="1.2"/><circle cx="440" cy="490" r="15.5" fill="none" stroke="rgba(60,190,215,0.22)" stroke-width="1.4"/>
<circle cx="490" cy="479" r="13.3" fill="rgba(60,201,227,0.16)"/><circle cx="490" cy="479" r="14.200000000000001" fill="none" stroke="rgba(255,255,255,0.3)" stroke-width="1.2"/><circle cx="490" cy="479" r="15.5" fill="none" stroke="rgba(60,190,215,0.22)" stroke-width="1.4"/>
<text x="490" y="483.3" font-size="12" text-anchor="middle" fill="rgba(60,85,95,0.42)" font-family="Liberation Sans">47</text>
<circle cx="544" cy="390" r="13.3" fill="rgba(60,201,227,0.16)"/><circle cx="544" cy="390" r="14.200000000000001" fill="none" stroke="rgba(255,255,255,0.3)" stroke-width="1.2"/><circle cx="544" cy="390" r="15.5" fill="none" stroke="rgba(60,190,215,0.22)" stroke-width="1.4"/>
<circle cx="544" cy="456.7" r="13.3" fill="rgba(60,201,227,0.16)"/><circle cx="544" cy="456.7" r="14.200000000000001" fill="none" stroke="rgba(255,255,255,0.3)" stroke-width="1.2"/><circle cx="544" cy="456.7" r="15.5" fill="none" stroke="rgba(60,190,215,0.22)" stroke-width="1.4"/>
<circle cx="687.5" cy="100.6" r="13.3" fill="rgba(60,201,227,0.16)"/><circle cx="687.5" cy="100.6" r="14.200000000000001" fill="none" stroke="rgba(255,255,255,0.3)" stroke-width="1.2"/><circle cx="687.5" cy="100.6" r="15.5" fill="none" stroke="rgba(60,190,215,0.22)" stroke-width="1.4"/>
<text x="687.5" y="104.89999999999999" font-size="12" text-anchor="middle" fill="rgba(60,85,95,0.42)" font-family="Liberation Sans">14</text>
<circle cx="569.4" cy="132.5" r="13.3" fill="rgba(60,201,227,0.16)"/><circle cx="569.4" cy="132.5" r="14.200000000000001" fill="none" stroke="rgba(255,255,255,0.3)" stroke-width="1.2"/><circle cx="569.4" cy="132.5" r="15.5" fill="none" stroke="rgba(60,190,215,0.22)" stroke-width="1.4"/>
<text x="569.4" y="136.8" font-size="12" text-anchor="middle" fill="rgba(60,85,95,0.42)" font-family="Liberation Sans">13</text>
<circle cx="634.7" cy="142.8" r="13.3" fill="rgba(60,201,227,0.16)"/><circle cx="634.7" cy="142.8" r="14.200000000000001" fill="none" stroke="rgba(255,255,255,0.3)" stroke-width="1.2"/><circle cx="634.7" cy="142.8" r="15.5" fill="none" stroke="rgba(60,190,215,0.22)" stroke-width="1.4"/>
<text x="634.7" y="147.10000000000002" font-size="12" text-anchor="middle" fill="rgba(60,85,95,0.42)" font-family="Liberation Sans">8</text>
<circle cx="714" cy="158.3" r="13.3" fill="rgba(60,201,227,0.16)"/><circle cx="714" cy="158.3" r="14.200000000000001" fill="none" stroke="rgba(255,255,255,0.3)" stroke-width="1.2"/><circle cx="714" cy="158.3" r="15.5" fill="none" stroke="rgba(60,190,215,0.22)" stroke-width="1.4"/>
<text x="714" y="162.60000000000002" font-size="12" text-anchor="middle" fill="rgba(60,85,95,0.42)" font-family="Liberation Sans">24</text>
<circle cx="760.5" cy="156" r="13.3" fill="rgba(60,201,227,0.16)"/><circle cx="760.5" cy="156" r="14.200000000000001" fill="none" stroke="rgba(255,255,255,0.3)" stroke-width="1.2"/><circle cx="760.5" cy="156" r="15.5" fill="none" stroke="rgba(60,190,215,0.22)" stroke-width="1.4"/>
<text x="760.5" y="160.3" font-size="12" text-anchor="middle" fill="rgba(60,85,95,0.42)" font-family="Liberation Sans">10</text>
<circle cx="657" cy="195" r="13.3" fill="rgba(60,201,227,0.16)"/><circle cx="657" cy="195" r="14.200000000000001" fill="none" stroke="rgba(255,255,255,0.3)" stroke-width="1.2"/><circle cx="657" cy="195" r="15.5" fill="none" stroke="rgba(60,190,215,0.22)" stroke-width="1.4"/>
<text x="657" y="199.3" font-size="12" text-anchor="middle" fill="rgba(60,85,95,0.42)" font-family="Liberation Sans">4</text>
<circle cx="605.6" cy="210.3" r="13.3" fill="rgba(60,201,227,0.16)"/><circle cx="605.6" cy="210.3" r="14.200000000000001" fill="none" stroke="rgba(255,255,255,0.3)" stroke-width="1.2"/><circle cx="605.6" cy="210.3" r="15.5" fill="none" stroke="rgba(60,190,215,0.22)" stroke-width="1.4"/>
<text x="605.6" y="214.60000000000002" font-size="12" text-anchor="middle" fill="rgba(60,85,95,0.42)" font-family="Liberation Sans">10</text>
<circle cx="645.8" cy="249" r="13.3" fill="rgba(60,201,227,0.16)"/><circle cx="645.8" cy="249" r="14.200000000000001" fill="none" stroke="rgba(255,255,255,0.3)" stroke-width="1.2"/><circle cx="645.8" cy="249" r="15.5" fill="none" stroke="rgba(60,190,215,0.22)" stroke-width="1.4"/>
<text x="645.8" y="253.3" font-size="12" text-anchor="middle" fill="rgba(60,85,95,0.42)" font-family="Liberation Sans">3</text>
<circle cx="693" cy="243.6" r="13.3" fill="rgba(60,201,227,0.16)"/><circle cx="693" cy="243.6" r="14.200000000000001" fill="none" stroke="rgba(255,255,255,0.3)" stroke-width="1.2"/><circle cx="693" cy="243.6" r="15.5" fill="none" stroke="rgba(60,190,215,0.22)" stroke-width="1.4"/>
<text x="693" y="247.9" font-size="12" text-anchor="middle" fill="rgba(60,85,95,0.42)" font-family="Liberation Sans">7</text>
<circle cx="772" cy="210.3" r="13.3" fill="rgba(60,201,227,0.16)"/><circle cx="772" cy="210.3" r="14.200000000000001" fill="none" stroke="rgba(255,255,255,0.3)" stroke-width="1.2"/><circle cx="772" cy="210.3" r="15.5" fill="none" stroke="rgba(60,190,215,0.22)" stroke-width="1.4"/>
<text x="772" y="214.60000000000002" font-size="12" text-anchor="middle" fill="rgba(60,85,95,0.42)" font-family="Liberation Sans">25</text>
<circle cx="750" cy="263" r="13.3" fill="rgba(60,201,227,0.16)"/><circle cx="750" cy="263" r="14.200000000000001" fill="none" stroke="rgba(255,255,255,0.3)" stroke-width="1.2"/><circle cx="750" cy="263" r="15.5" fill="none" stroke="rgba(60,190,215,0.22)" stroke-width="1.4"/>
<text x="750" y="267.3" font-size="12" text-anchor="middle" fill="rgba(60,85,95,0.42)" font-family="Liberation Sans">20</text>
<circle cx="780.5" cy="103.3" r="13.3" fill="rgba(60,201,227,0.16)"/><circle cx="780.5" cy="103.3" r="14.200000000000001" fill="none" stroke="rgba(255,255,255,0.3)" stroke-width="1.2"/><circle cx="780.5" cy="103.3" r="15.5" fill="none" stroke="rgba(60,190,215,0.22)" stroke-width="1.4"/>
<text x="780.5" y="107.6" font-size="12" text-anchor="middle" fill="rgba(60,85,95,0.42)" font-family="Liberation Sans">14</text>
<circle cx="550" cy="202" r="13.3" fill="rgba(60,201,227,0.16)"/><circle cx="550" cy="202" r="14.200000000000001" fill="none" stroke="rgba(255,255,255,0.3)" stroke-width="1.2"/><circle cx="550" cy="202" r="15.5" fill="none" stroke="rgba(60,190,215,0.22)" stroke-width="1.4"/>
<text x="550" y="206.3" font-size="12" text-anchor="middle" fill="rgba(60,85,95,0.42)" font-family="Liberation Sans">4</text>
<circle cx="615" cy="284" r="13.3" fill="rgba(60,201,227,0.16)"/><circle cx="615" cy="284" r="14.200000000000001" fill="none" stroke="rgba(255,255,255,0.3)" stroke-width="1.2"/><circle cx="615" cy="284" r="15.5" fill="none" stroke="rgba(60,190,215,0.22)" stroke-width="1.4"/>
<circle cx="557" cy="77" r="13.3" fill="rgba(60,201,227,0.16)"/><circle cx="557" cy="77" r="14.200000000000001" fill="none" stroke="rgba(255,255,255,0.3)" stroke-width="1.2"/><circle cx="557" cy="77" r="15.5" fill="none" stroke="rgba(60,190,215,0.22)" stroke-width="1.4"/>
<circle cx="665.3" cy="316.4" r="13.3" fill="rgba(60,201,227,0.16)"/><circle cx="665.3" cy="316.4" r="14.200000000000001" fill="none" stroke="rgba(255,255,255,0.3)" stroke-width="1.2"/><circle cx="665.3" cy="316.4" r="15.5" fill="none" stroke="rgba(60,190,215,0.22)" stroke-width="1.4"/>
<circle cx="726.4" cy="359.4" r="13.3" fill="rgba(60,201,227,0.16)"/><circle cx="726.4" cy="359.4" r="14.200000000000001" fill="none" stroke="rgba(255,255,255,0.3)" stroke-width="1.2"/><circle cx="726.4" cy="359.4" r="15.5" fill="none" stroke="rgba(60,190,215,0.22)" stroke-width="1.4"/>
<circle cx="755.6" cy="331.7" r="13.3" fill="rgba(60,201,227,0.16)"/><circle cx="755.6" cy="331.7" r="14.200000000000001" fill="none" stroke="rgba(255,255,255,0.3)" stroke-width="1.2"/><circle cx="755.6" cy="331.7" r="15.5" fill="none" stroke="rgba(60,190,215,0.22)" stroke-width="1.4"/>
<circle cx="661" cy="374.7" r="13.3" fill="rgba(60,201,227,0.16)"/><circle cx="661" cy="374.7" r="14.200000000000001" fill="none" stroke="rgba(255,255,255,0.3)" stroke-width="1.2"/><circle cx="661" cy="374.7" r="15.5" fill="none" stroke="rgba(60,190,215,0.22)" stroke-width="1.4"/>
<circle cx="623.6" cy="402.5" r="13.3" fill="rgba(60,201,227,0.16)"/><circle cx="623.6" cy="402.5" r="14.200000000000001" fill="none" stroke="rgba(255,255,255,0.3)" stroke-width="1.2"/><circle cx="623.6" cy="402.5" r="15.5" fill="none" stroke="rgba(60,190,215,0.22)" stroke-width="1.4"/>
<text x="623.6" y="406.8" font-size="12" text-anchor="middle" fill="rgba(60,85,95,0.42)" font-family="Liberation Sans">21</text>
<circle cx="686" cy="422" r="13.3" fill="rgba(60,201,227,0.16)"/><circle cx="686" cy="422" r="14.200000000000001" fill="none" stroke="rgba(255,255,255,0.3)" stroke-width="1.2"/><circle cx="686" cy="422" r="15.5" fill="none" stroke="rgba(60,190,215,0.22)" stroke-width="1.4"/>
<text x="686" y="426.3" font-size="12" text-anchor="middle" fill="rgba(60,85,95,0.42)" font-family="Liberation Sans">4</text>
<circle cx="564" cy="456.7" r="13.3" fill="rgba(60,201,227,0.16)"/><circle cx="564" cy="456.7" r="14.200000000000001" fill="none" stroke="rgba(255,255,255,0.3)" stroke-width="1.2"/><circle cx="564" cy="456.7" r="15.5" fill="none" stroke="rgba(60,190,215,0.22)" stroke-width="1.4"/>
<text x="564" y="461.0" font-size="12" text-anchor="middle" fill="rgba(60,85,95,0.42)" font-family="Liberation Sans">62</text>
<circle cx="672" cy="462" r="13.3" fill="rgba(60,201,227,0.16)"/><circle cx="672" cy="462" r="14.200000000000001" fill="none" stroke="rgba(255,255,255,0.3)" stroke-width="1.2"/><circle cx="672" cy="462" r="15.5" fill="none" stroke="rgba(60,190,215,0.22)" stroke-width="1.4"/>
<text x="672" y="466.3" font-size="12" text-anchor="middle" fill="rgba(60,85,95,0.42)" font-family="Liberation Sans">2</text>
<circle cx="743" cy="451" r="13.3" fill="rgba(60,201,227,0.16)"/><circle cx="743" cy="451" r="14.200000000000001" fill="none" stroke="rgba(255,255,255,0.3)" stroke-width="1.2"/><circle cx="743" cy="451" r="15.5" fill="none" stroke="rgba(60,190,215,0.22)" stroke-width="1.4"/>
<text x="743" y="455.3" font-size="12" text-anchor="middle" fill="rgba(60,85,95,0.42)" font-family="Liberation Sans">21</text>
<circle cx="612.5" cy="490" r="13.3" fill="rgba(60,201,227,0.16)"/><circle cx="612.5" cy="490" r="14.200000000000001" fill="none" stroke="rgba(255,255,255,0.3)" stroke-width="1.2"/><circle cx="612.5" cy="490" r="15.5" fill="none" stroke="rgba(60,190,215,0.22)" stroke-width="1.4"/>
<text x="612.5" y="494.3" font-size="12" text-anchor="middle" fill="rgba(60,85,95,0.42)" font-family="Liberation Sans">27</text>
<circle cx="725" cy="498.3" r="13.3" fill="rgba(60,201,227,0.16)"/><circle cx="725" cy="498.3" r="14.200000000000001" fill="none" stroke="rgba(255,255,255,0.3)" stroke-width="1.2"/><circle cx="725" cy="498.3" r="15.5" fill="none" stroke="rgba(60,190,215,0.22)" stroke-width="1.4"/>
<text x="725" y="502.6" font-size="12" text-anchor="middle" fill="rgba(60,85,95,0.42)" font-family="Liberation Sans">5</text>
<circle cx="780.5" cy="505.3" r="13.3" fill="rgba(60,201,227,0.16)"/><circle cx="780.5" cy="505.3" r="14.200000000000001" fill="none" stroke="rgba(255,255,255,0.3)" stroke-width="1.2"/><circle cx="780.5" cy="505.3" r="15.5" fill="none" stroke="rgba(60,190,215,0.22)" stroke-width="1.4"/>
<circle cx="1013" cy="88" r="13.3" fill="rgba(60,201,227,0.16)"/><circle cx="1013" cy="88" r="14.200000000000001" fill="none" stroke="rgba(255,255,255,0.3)" stroke-width="1.2"/><circle cx="1013" cy="88" r="15.5" fill="none" stroke="rgba(60,190,215,0.22)" stroke-width="1.4"/>
<text x="1013" y="92.3" font-size="12" text-anchor="middle" fill="rgba(60,85,95,0.42)" font-family="Liberation Sans">8</text>
<circle cx="866.7" cy="99" r="13.3" fill="rgba(60,201,227,0.16)"/><circle cx="866.7" cy="99" r="14.200000000000001" fill="none" stroke="rgba(255,255,255,0.3)" stroke-width="1.2"/><circle cx="866.7" cy="99" r="15.5" fill="none" stroke="rgba(60,190,215,0.22)" stroke-width="1.4"/>
<circle cx="818" cy="152" r="13.3" fill="rgba(60,201,227,0.16)"/><circle cx="818" cy="152" r="14.200000000000001" fill="none" stroke="rgba(255,255,255,0.3)" stroke-width="1.2"/><circle cx="818" cy="152" r="15.5" fill="none" stroke="rgba(60,190,215,0.22)" stroke-width="1.4"/>
<text x="818" y="156.3" font-size="12" text-anchor="middle" fill="rgba(60,85,95,0.42)" font-family="Liberation Sans">31</text>
<circle cx="897" cy="168.6" r="13.3" fill="rgba(60,201,227,0.16)"/><circle cx="897" cy="168.6" r="14.200000000000001" fill="none" stroke="rgba(255,255,255,0.3)" stroke-width="1.2"/><circle cx="897" cy="168.6" r="15.5" fill="none" stroke="rgba(60,190,215,0.22)" stroke-width="1.4"/>
<circle cx="958" cy="195" r="13.3" fill="rgba(60,201,227,0.16)"/><circle cx="958" cy="195" r="14.200000000000001" fill="none" stroke="rgba(255,255,255,0.3)" stroke-width="1.2"/><circle cx="958" cy="195" r="15.5" fill="none" stroke="rgba(60,190,215,0.22)" stroke-width="1.4"/>
<circle cx="1004" cy="172.8" r="13.3" fill="rgba(60,201,227,0.16)"/><circle cx="1004" cy="172.8" r="14.200000000000001" fill="none" stroke="rgba(255,255,255,0.3)" stroke-width="1.2"/><circle cx="1004" cy="172.8" r="15.5" fill="none" stroke="rgba(60,190,215,0.22)" stroke-width="1.4"/>
<circle cx="841.7" cy="217" r="13.3" fill="rgba(60,201,227,0.16)"/><circle cx="841.7" cy="217" r="14.200000000000001" fill="none" stroke="rgba(255,255,255,0.3)" stroke-width="1.2"/><circle cx="841.7" cy="217" r="15.5" fill="none" stroke="rgba(60,190,215,0.22)" stroke-width="1.4"/>
<circle cx="802.8" cy="242" r="13.3" fill="rgba(60,201,227,0.16)"/><circle cx="802.8" cy="242" r="14.200000000000001" fill="none" stroke="rgba(255,255,255,0.3)" stroke-width="1.2"/><circle cx="802.8" cy="242" r="15.5" fill="none" stroke="rgba(60,190,215,0.22)" stroke-width="1.4"/>
<circle cx="994.4" cy="245" r="13.3" fill="rgba(60,201,227,0.16)"/><circle cx="994.4" cy="245" r="14.200000000000001" fill="none" stroke="rgba(255,255,255,0.3)" stroke-width="1.2"/><circle cx="994.4" cy="245" r="15.5" fill="none" stroke="rgba(60,190,215,0.22)" stroke-width="1.4"/>
<circle cx="861" cy="264.4" r="13.3" fill="rgba(60,201,227,0.16)"/><circle cx="861" cy="264.4" r="14.200000000000001" fill="none" stroke="rgba(255,255,255,0.3)" stroke-width="1.2"/><circle cx="861" cy="264.4" r="15.5" fill="none" stroke="rgba(60,190,215,0.22)" stroke-width="1.4"/>
<circle cx="914" cy="281" r="13.3" fill="rgba(60,201,227,0.16)"/><circle cx="914" cy="281" r="14.200000000000001" fill="none" stroke="rgba(255,255,255,0.3)" stroke-width="1.2"/><circle cx="914" cy="281" r="15.5" fill="none" stroke="rgba(60,190,215,0.22)" stroke-width="1.4"/>
<circle cx="814" cy="286.7" r="13.3" fill="rgba(60,201,227,0.16)"/><circle cx="814" cy="286.7" r="14.200000000000001" fill="none" stroke="rgba(255,255,255,0.3)" stroke-width="1.2"/><circle cx="814" cy="286.7" r="15.5" fill="none" stroke="rgba(60,190,215,0.22)" stroke-width="1.4"/>
<circle cx="830.6" cy="295.6" r="13.3" fill="rgba(60,201,227,0.16)"/><circle cx="830.6" cy="295.6" r="14.200000000000001" fill="none" stroke="rgba(255,255,255,0.3)" stroke-width="1.2"/><circle cx="830.6" cy="295.6" r="15.5" fill="none" stroke="rgba(60,190,215,0.22)" stroke-width="1.4"/>
<circle cx="862.5" cy="324.7" r="13.3" fill="rgba(60,201,227,0.16)"/><circle cx="862.5" cy="324.7" r="14.200000000000001" fill="none" stroke="rgba(255,255,255,0.3)" stroke-width="1.2"/><circle cx="862.5" cy="324.7" r="15.5" fill="none" stroke="rgba(60,190,215,0.22)" stroke-width="1.4"/>
<text x="862.5" y="329.0" font-size="12" text-anchor="middle" fill="rgba(60,85,95,0.42)" font-family="Liberation Sans">95</text>
<circle cx="914" cy="348.3" r="13.3" fill="rgba(60,201,227,0.16)"/><circle cx="914" cy="348.3" r="14.200000000000001" fill="none" stroke="rgba(255,255,255,0.3)" stroke-width="1.2"/><circle cx="914" cy="348.3" r="15.5" fill="none" stroke="rgba(60,190,215,0.22)" stroke-width="1.4"/>
<circle cx="814" cy="405.3" r="13.3" fill="rgba(60,201,227,0.16)"/><circle cx="814" cy="405.3" r="14.200000000000001" fill="none" stroke="rgba(255,255,255,0.3)" stroke-width="1.2"/><circle cx="814" cy="405.3" r="15.5" fill="none" stroke="rgba(60,190,215,0.22)" stroke-width="1.4"/>
<text x="814" y="409.6" font-size="12" text-anchor="middle" fill="rgba(60,85,95,0.42)" font-family="Liberation Sans">8</text>
<circle cx="873.6" cy="392.8" r="13.3" fill="rgba(60,201,227,0.16)"/><circle cx="873.6" cy="392.8" r="14.200000000000001" fill="none" stroke="rgba(255,255,255,0.3)" stroke-width="1.2"/><circle cx="873.6" cy="392.8" r="15.5" fill="none" stroke="rgba(60,190,215,0.22)" stroke-width="1.4"/>
<text x="873.6" y="397.1" font-size="12" text-anchor="middle" fill="rgba(60,85,95,0.42)" font-family="Liberation Sans">48</text>
<circle cx="922" cy="295.6" r="13.3" fill="rgba(60,201,227,0.16)"/><circle cx="922" cy="295.6" r="14.200000000000001" fill="none" stroke="rgba(255,255,255,0.3)" stroke-width="1.2"/><circle cx="922" cy="295.6" r="15.5" fill="none" stroke="rgba(60,190,215,0.22)" stroke-width="1.4"/>
<circle cx="966.7" cy="342.8" r="13.3" fill="rgba(60,201,227,0.16)"/><circle cx="966.7" cy="342.8" r="14.200000000000001" fill="none" stroke="rgba(255,255,255,0.3)" stroke-width="1.2"/><circle cx="966.7" cy="342.8" r="15.5" fill="none" stroke="rgba(60,190,215,0.22)" stroke-width="1.4"/>
<circle cx="890.3" cy="444.2" r="13.3" fill="rgba(60,201,227,0.16)"/><circle cx="890.3" cy="444.2" r="14.200000000000001" fill="none" stroke="rgba(255,255,255,0.3)" stroke-width="1.2"/><circle cx="890.3" cy="444.2" r="15.5" fill="none" stroke="rgba(60,190,215,0.22)" stroke-width="1.4"/>
<text x="890.3" y="448.5" font-size="12" text-anchor="middle" fill="rgba(60,85,95,0.42)" font-family="Liberation Sans">56</text>
<circle cx="941.7" cy="431.7" r="13.3" fill="rgba(60,201,227,0.16)"/><circle cx="941.7" cy="431.7" r="14.200000000000001" fill="none" stroke="rgba(255,255,255,0.3)" stroke-width="1.2"/><circle cx="941.7" cy="431.7" r="15.5" fill="none" stroke="rgba(60,190,215,0.22)" stroke-width="1.4"/>
<text x="941.7" y="436.0" font-size="12" text-anchor="middle" fill="rgba(60,85,95,0.42)" font-family="Liberation Sans">8</text>
<circle cx="991.7" cy="422" r="13.3" fill="rgba(60,201,227,0.16)"/><circle cx="991.7" cy="422" r="14.200000000000001" fill="none" stroke="rgba(255,255,255,0.3)" stroke-width="1.2"/><circle cx="991.7" cy="422" r="15.5" fill="none" stroke="rgba(60,190,215,0.22)" stroke-width="1.4"/>
<text x="991.7" y="426.3" font-size="12" text-anchor="middle" fill="rgba(60,85,95,0.42)" font-family="Liberation Sans">71</text>
<circle cx="964" cy="469" r="13.3" fill="rgba(60,201,227,0.16)"/><circle cx="964" cy="469" r="14.200000000000001" fill="none" stroke="rgba(255,255,255,0.3)" stroke-width="1.2"/><circle cx="964" cy="469" r="15.5" fill="none" stroke="rgba(60,190,215,0.22)" stroke-width="1.4"/>
<text x="964" y="473.3" font-size="12" text-anchor="middle" fill="rgba(60,85,95,0.42)" font-family="Liberation Sans">3</text>
<circle cx="1005" cy="475" r="13.3" fill="rgba(60,201,227,0.16)"/><circle cx="1005" cy="475" r="14.200000000000001" fill="none" stroke="rgba(255,255,255,0.3)" stroke-width="1.2"/><circle cx="1005" cy="475" r="15.5" fill="none" stroke="rgba(60,190,215,0.22)" stroke-width="1.4"/>
<text x="1005" y="479.3" font-size="12" text-anchor="middle" fill="rgba(60,85,95,0.42)" font-family="Liberation Sans">193</text>
<circle cx="933" cy="498.3" r="13.3" fill="rgba(60,201,227,0.16)"/><circle cx="933" cy="498.3" r="14.200000000000001" fill="none" stroke="rgba(255,255,255,0.3)" stroke-width="1.2"/><circle cx="933" cy="498.3" r="15.5" fill="none" stroke="rgba(60,190,215,0.22)" stroke-width="1.4"/>
<text x="933" y="502.6" font-size="12" text-anchor="middle" fill="rgba(60,85,95,0.42)" font-family="Liberation Sans">66</text>
<circle cx="830.6" cy="472" r="13.3" fill="rgba(60,201,227,0.16)"/><circle cx="830.6" cy="472" r="14.200000000000001" fill="none" stroke="rgba(255,255,255,0.3)" stroke-width="1.2"/><circle cx="830.6" cy="472" r="15.5" fill="none" stroke="rgba(60,190,215,0.22)" stroke-width="1.4"/>
<circle cx="1241.6" cy="92" r="13.3" fill="rgba(60,201,227,0.16)"/><circle cx="1241.6" cy="92" r="14.200000000000001" fill="none" stroke="rgba(255,255,255,0.3)" stroke-width="1.2"/><circle cx="1241.6" cy="92" r="15.5" fill="none" stroke="rgba(60,190,215,0.22)" stroke-width="1.4"/>
<circle cx="1241" cy="136" r="13.3" fill="rgba(60,201,227,0.16)"/><circle cx="1241" cy="136" r="14.200000000000001" fill="none" stroke="rgba(255,255,255,0.3)" stroke-width="1.2"/><circle cx="1241" cy="136" r="15.5" fill="none" stroke="rgba(60,190,215,0.22)" stroke-width="1.4"/>
<circle cx="1241" cy="155" r="13.3" fill="rgba(60,201,227,0.16)"/><circle cx="1241" cy="155" r="14.200000000000001" fill="none" stroke="rgba(255,255,255,0.3)" stroke-width="1.2"/><circle cx="1241" cy="155" r="15.5" fill="none" stroke="rgba(60,190,215,0.22)" stroke-width="1.4"/>
<circle cx="1239" cy="336.6" r="13.3" fill="rgba(60,201,227,0.16)"/><circle cx="1239" cy="336.6" r="14.200000000000001" fill="none" stroke="rgba(255,255,255,0.3)" stroke-width="1.2"/><circle cx="1239" cy="336.6" r="15.5" fill="none" stroke="rgba(60,190,215,0.22)" stroke-width="1.4"/>
<circle cx="389" cy="124" r="13.3" fill="rgba(110,160,240,0.2)"/><circle cx="389" cy="124" r="14.200000000000001" fill="none" stroke="rgba(255,255,255,0.3)" stroke-width="1.2"/><circle cx="389" cy="124" r="15.5" fill="none" stroke="rgba(110,160,240,0.18)" stroke-width="1.4"/>
<text x="389" y="128.3" font-size="12" text-anchor="middle" fill="rgba(60,85,95,0.42)" font-family="Liberation Sans">6</text>
<circle cx="324.4" cy="195" r="13.3" fill="rgba(110,160,240,0.2)"/><circle cx="324.4" cy="195" r="14.200000000000001" fill="none" stroke="rgba(255,255,255,0.3)" stroke-width="1.2"/><circle cx="324.4" cy="195" r="15.5" fill="none" stroke="rgba(110,160,240,0.18)" stroke-width="1.4"/>
<text x="324.4" y="199.3" font-size="12" text-anchor="middle" fill="rgba(60,85,95,0.42)" font-family="Liberation Sans">2</text>
<circle cx="522" cy="304" r="13.3" fill="rgba(110,160,240,0.2)"/><circle cx="522" cy="304" r="14.200000000000001" fill="none" stroke="rgba(255,255,255,0.3)" stroke-width="1.2"/><circle cx="522" cy="304" r="15.5" fill="none" stroke="rgba(110,160,240,0.18)" stroke-width="1.4"/>
<text x="522" y="308.3" font-size="12" text-anchor="middle" fill="rgba(60,85,95,0.42)" font-family="Liberation Sans">3</text>
<circle cx="519" cy="454" r="13.3" fill="rgba(110,160,240,0.2)"/><circle cx="519" cy="454" r="14.200000000000001" fill="none" stroke="rgba(255,255,255,0.3)" stroke-width="1.2"/><circle cx="519" cy="454" r="15.5" fill="none" stroke="rgba(110,160,240,0.18)" stroke-width="1.4"/>
<text x="519" y="458.3" font-size="12" text-anchor="middle" fill="rgba(60,85,95,0.42)" font-family="Liberation Sans">3</text>
<circle cx="610.6" cy="93.6" r="13.3" fill="rgba(110,160,240,0.2)"/><circle cx="610.6" cy="93.6" r="14.200000000000001" fill="none" stroke="rgba(255,255,255,0.3)" stroke-width="1.2"/><circle cx="610.6" cy="93.6" r="15.5" fill="none" stroke="rgba(110,160,240,0.18)" stroke-width="1.4"/>
<text x="610.6" y="97.89999999999999" font-size="12" text-anchor="middle" fill="rgba(60,85,95,0.42)" font-family="Liberation Sans">2</text>
<circle cx="662.5" cy="77" r="13.3" fill="rgba(110,160,240,0.2)"/><circle cx="662.5" cy="77" r="14.200000000000001" fill="none" stroke="rgba(255,255,255,0.3)" stroke-width="1.2"/><circle cx="662.5" cy="77" r="15.5" fill="none" stroke="rgba(110,160,240,0.18)" stroke-width="1.4"/>
<text x="662.5" y="81.3" font-size="12" text-anchor="middle" fill="rgba(60,85,95,0.42)" font-family="Liberation Sans">3</text>
<circle cx="616.7" cy="228.3" r="13.3" fill="rgba(110,160,240,0.2)"/><circle cx="616.7" cy="228.3" r="14.200000000000001" fill="none" stroke="rgba(255,255,255,0.3)" stroke-width="1.2"/><circle cx="616.7" cy="228.3" r="15.5" fill="none" stroke="rgba(110,160,240,0.18)" stroke-width="1.4"/>
<text x="616.7" y="232.60000000000002" font-size="12" text-anchor="middle" fill="rgba(60,85,95,0.42)" font-family="Liberation Sans">2</text>
<circle cx="698.6" cy="274" r="13.3" fill="rgba(110,160,240,0.2)"/><circle cx="698.6" cy="274" r="14.200000000000001" fill="none" stroke="rgba(255,255,255,0.3)" stroke-width="1.2"/><circle cx="698.6" cy="274" r="15.5" fill="none" stroke="rgba(110,160,240,0.18)" stroke-width="1.4"/>
<text x="698.6" y="278.3" font-size="12" text-anchor="middle" fill="rgba(60,85,95,0.42)" font-family="Liberation Sans">3</text>
<circle cx="641.7" cy="285.3" r="13.3" fill="rgba(110,160,240,0.2)"/><circle cx="641.7" cy="285.3" r="14.200000000000001" fill="none" stroke="rgba(255,255,255,0.3)" stroke-width="1.2"/><circle cx="641.7" cy="285.3" r="15.5" fill="none" stroke="rgba(110,160,240,0.18)" stroke-width="1.4"/>
<text x="641.7" y="289.6" font-size="12" text-anchor="middle" fill="rgba(60,85,95,0.42)" font-family="Liberation Sans">4</text>
<circle cx="714" cy="344" r="13.3" fill="rgba(110,160,240,0.2)"/><circle cx="714" cy="344" r="14.200000000000001" fill="none" stroke="rgba(255,255,255,0.3)" stroke-width="1.2"/><circle cx="714" cy="344" r="15.5" fill="none" stroke="rgba(110,160,240,0.18)" stroke-width="1.4"/>
<circle cx="561" cy="399.7" r="13.3" fill="rgba(110,160,240,0.2)"/><circle cx="561" cy="399.7" r="14.200000000000001" fill="none" stroke="rgba(255,255,255,0.3)" stroke-width="1.2"/><circle cx="561" cy="399.7" r="15.5" fill="none" stroke="rgba(110,160,240,0.18)" stroke-width="1.4"/>
<text x="561" y="404.0" font-size="12" text-anchor="middle" fill="rgba(60,85,95,0.42)" font-family="Liberation Sans">4</text>
<circle cx="577.8" cy="478.9" r="13.3" fill="rgba(110,160,240,0.2)"/><circle cx="577.8" cy="478.9" r="14.200000000000001" fill="none" stroke="rgba(255,255,255,0.3)" stroke-width="1.2"/><circle cx="577.8" cy="478.9" r="15.5" fill="none" stroke="rgba(110,160,240,0.18)" stroke-width="1.4"/>
<text x="577.8" y="483.2" font-size="12" text-anchor="middle" fill="rgba(60,85,95,0.42)" font-family="Liberation Sans">6</text>
<circle cx="704" cy="481.7" r="13.3" fill="rgba(110,160,240,0.2)"/><circle cx="704" cy="481.7" r="14.200000000000001" fill="none" stroke="rgba(255,255,255,0.3)" stroke-width="1.2"/><circle cx="704" cy="481.7" r="15.5" fill="none" stroke="rgba(110,160,240,0.18)" stroke-width="1.4"/>
<text x="704" y="486.0" font-size="12" text-anchor="middle" fill="rgba(60,85,95,0.42)" font-family="Liberation Sans">3</text>
<circle cx="868" cy="121.4" r="13.3" fill="rgba(110,160,240,0.2)"/><circle cx="868" cy="121.4" r="14.200000000000001" fill="none" stroke="rgba(255,255,255,0.3)" stroke-width="1.2"/><circle cx="868" cy="121.4" r="15.5" fill="none" stroke="rgba(110,160,240,0.18)" stroke-width="1.4"/>
<text x="868" y="125.7" font-size="12" text-anchor="middle" fill="rgba(60,85,95,0.42)" font-family="Liberation Sans">3</text>
<circle cx="901.4" cy="186.7" r="13.3" fill="rgba(110,160,240,0.2)"/><circle cx="901.4" cy="186.7" r="14.200000000000001" fill="none" stroke="rgba(255,255,255,0.3)" stroke-width="1.2"/><circle cx="901.4" cy="186.7" r="15.5" fill="none" stroke="rgba(110,160,240,0.18)" stroke-width="1.4"/>
<circle cx="982" cy="185.3" r="13.3" fill="rgba(110,160,240,0.2)"/><circle cx="982" cy="185.3" r="14.200000000000001" fill="none" stroke="rgba(255,255,255,0.3)" stroke-width="1.2"/><circle cx="982" cy="185.3" r="15.5" fill="none" stroke="rgba(110,160,240,0.18)" stroke-width="1.4"/>
<circle cx="900" cy="246.4" r="13.3" fill="rgba(110,160,240,0.2)"/><circle cx="900" cy="246.4" r="14.200000000000001" fill="none" stroke="rgba(255,255,255,0.3)" stroke-width="1.2"/><circle cx="900" cy="246.4" r="15.5" fill="none" stroke="rgba(110,160,240,0.18)" stroke-width="1.4"/>
<text x="900" y="250.70000000000002" font-size="12" text-anchor="middle" fill="rgba(60,85,95,0.42)" font-family="Liberation Sans">5</text>
<circle cx="1000" cy="256" r="13.3" fill="rgba(110,160,240,0.2)"/><circle cx="1000" cy="256" r="14.200000000000001" fill="none" stroke="rgba(255,255,255,0.3)" stroke-width="1.2"/><circle cx="1000" cy="256" r="15.5" fill="none" stroke="rgba(110,160,240,0.18)" stroke-width="1.4"/>
<text x="1000" y="260.3" font-size="12" text-anchor="middle" fill="rgba(60,85,95,0.42)" font-family="Liberation Sans">2</text>
<circle cx="936" cy="277" r="13.3" fill="rgba(110,160,240,0.2)"/><circle cx="936" cy="277" r="14.200000000000001" fill="none" stroke="rgba(255,255,255,0.3)" stroke-width="1.2"/><circle cx="936" cy="277" r="15.5" fill="none" stroke="rgba(110,160,240,0.18)" stroke-width="1.4"/>
<circle cx="897" cy="340" r="13.3" fill="rgba(110,160,240,0.2)"/><circle cx="897" cy="340" r="14.200000000000001" fill="none" stroke="rgba(255,255,255,0.3)" stroke-width="1.2"/><circle cx="897" cy="340" r="15.5" fill="none" stroke="rgba(110,160,240,0.18)" stroke-width="1.4"/>
<circle cx="826.4" cy="387.2" r="13.3" fill="rgba(110,160,240,0.2)"/><circle cx="826.4" cy="387.2" r="14.200000000000001" fill="none" stroke="rgba(255,255,255,0.3)" stroke-width="1.2"/><circle cx="826.4" cy="387.2" r="15.5" fill="none" stroke="rgba(110,160,240,0.18)" stroke-width="1.4"/>
<text x="826.4" y="391.5" font-size="12" text-anchor="middle" fill="rgba(60,85,95,0.42)" font-family="Liberation Sans">2</text>
<circle cx="911" cy="379" r="13.3" fill="rgba(110,160,240,0.2)"/><circle cx="911" cy="379" r="14.200000000000001" fill="none" stroke="rgba(255,255,255,0.3)" stroke-width="1.2"/><circle cx="911" cy="379" r="15.5" fill="none" stroke="rgba(110,160,240,0.18)" stroke-width="1.4"/>
<text x="911" y="383.3" font-size="12" text-anchor="middle" fill="rgba(60,85,95,0.42)" font-family="Liberation Sans">2</text>
<circle cx="964" cy="331.7" r="13.3" fill="rgba(110,160,240,0.2)"/><circle cx="964" cy="331.7" r="14.200000000000001" fill="none" stroke="rgba(255,255,255,0.3)" stroke-width="1.2"/><circle cx="964" cy="331.7" r="15.5" fill="none" stroke="rgba(110,160,240,0.18)" stroke-width="1.4"/>
<circle cx="875" cy="440" r="13.3" fill="rgba(110,160,240,0.2)"/><circle cx="875" cy="440" r="14.200000000000001" fill="none" stroke="rgba(255,255,255,0.3)" stroke-width="1.2"/><circle cx="875" cy="440" r="15.5" fill="none" stroke="rgba(110,160,240,0.18)" stroke-width="1.4"/>
<text x="875" y="444.3" font-size="12" text-anchor="middle" fill="rgba(60,85,95,0.42)" font-family="Liberation Sans">4</text>
<circle cx="1005.5" cy="423.3" r="13.3" fill="rgba(110,160,240,0.2)"/><circle cx="1005.5" cy="423.3" r="14.200000000000001" fill="none" stroke="rgba(255,255,255,0.3)" stroke-width="1.2"/><circle cx="1005.5" cy="423.3" r="15.5" fill="none" stroke="rgba(110,160,240,0.18)" stroke-width="1.4"/>
<circle cx="1241" cy="207" r="13.3" fill="rgba(110,160,240,0.2)"/><circle cx="1241" cy="207" r="14.200000000000001" fill="none" stroke="rgba(255,255,255,0.3)" stroke-width="1.2"/><circle cx="1241" cy="207" r="15.5" fill="none" stroke="rgba(110,160,240,0.18)" stroke-width="1.4"/>
<circle cx="436" cy="140.8" r="5" fill="rgba(60,201,227,0.2)"/>
<circle cx="502.8" cy="88" r="5" fill="rgba(60,201,227,0.2)"/>
<circle cx="732" cy="90.8" r="5" fill="rgba(60,201,227,0.2)"/>
<circle cx="460" cy="451" r="5" fill="rgba(110,160,240,0.25)"/>
<circle cx="708" cy="171.4" r="5" fill="rgba(110,160,240,0.25)"/>
<circle cx="334.8" cy="241" r="5" fill="rgba(110,160,240,0.25)"/>
<circle cx="308" cy="116" r="6" fill="#e8437b" opacity="0.82"/>
<circle cx="308" cy="195" r="6" fill="#e8437b" opacity="0.82"/>
<circle cx="452.8" cy="492" r="8" fill="#e8437b" opacity="0.82"/>
<circle cx="478.6" cy="487" r="8" fill="#e8437b" opacity="0.82"/>
<circle cx="548.6" cy="390" r="6.5" fill="#e8437b" opacity="0.82"/>
<circle cx="601.4" cy="481.7" r="8" fill="#e8437b" opacity="0.82"/>
<circle cx="862.2" cy="257.6" r="7.5" fill="#e8437b" opacity="0.82"/>
<circle cx="868.3" cy="269.7" r="7.5" fill="#e8437b" opacity="0.82"/>
<circle cx="917.8" cy="223.2" r="7.5" fill="#e8437b" opacity="0.82"/>
<circle cx="882.4" cy="298" r="7.5" fill="#e8437b" opacity="0.82"/>
<circle cx="896.6" cy="300" r="7.5" fill="#e8437b" opacity="0.82"/>
<circle cx="874.3" cy="310" r="7.5" fill="#e8437b" opacity="0.82"/>
<circle cx="878.4" cy="319.2" r="7.5" fill="#e8437b" opacity="0.82"/>
<circle cx="891.5" cy="320.2" r="7.5" fill="#e8437b" opacity="0.82"/>
<circle cx="910.7" cy="328.3" r="7.5" fill="#e8437b" opacity="0.82"/>
<circle cx="900.6" cy="333.3" r="7.5" fill="#e8437b" opacity="0.82"/>
<circle cx="917.8" cy="342.4" r="7.5" fill="#e8437b" opacity="0.82"/>
<circle cx="907.7" cy="348.5" r="7.5" fill="#e8437b" opacity="0.82"/>
<circle cx="849" cy="340.4" r="7.5" fill="#e8437b" opacity="0.82"/>
<circle cx="927.9" cy="363" r="7.5" fill="#e8437b" opacity="0.82"/>
<circle cx="918" cy="370.5" r="7.5" fill="#e8437b" opacity="0.82"/>
<circle cx="979" cy="339.4" r="7.5" fill="#e8437b" opacity="0.82"/>
<circle cx="1014" cy="397" r="7.5" fill="#e8437b" opacity="0.82"/>
<circle cx="980.5" cy="438.6" r="7.5" fill="#e8437b" opacity="0.82"/>
<circle cx="995.8" cy="456.7" r="7.5" fill="#e8437b" opacity="0.82"/>
<circle cx="1039" cy="467.8" r="7.5" fill="#e8437b" opacity="0.82"/>
<circle cx="831.7" cy="480.7" r="8" fill="#e8437b" opacity="0.82"/>
<circle cx="977.8" cy="488.6" r="7.5" fill="#e8437b" opacity="0.82"/>
<circle cx="973" cy="493" r="7.5" fill="#e8437b" opacity="0.82"/>
<circle cx="1011" cy="485.8" r="7.5" fill="#e8437b" opacity="0.82"/>
<circle cx="1239" cy="342" r="7" fill="#e8437b" opacity="0.82"/>
</g>
    </svg>
    <div class="abs" style="left:911.3px;top:339px;width:21.6px;height:66.3px;background:#fff;border-radius:3px;box-shadow:0 0 0 1.5px rgba(0,0,0,0.08)"></div>
    <div class="abs" style="left:911.3px;top:361px;width:21.6px;height:1px;background:#ddd"></div>
    <div class="abs" style="left:911.3px;top:383px;width:21.6px;height:1px;background:#ddd"></div>
    <div class="abs" style="left:917.5px;top:370.5px;width:9px;height:2.2px;background:#333"></div>
    <svg class="abs" style="left:916px;top:387px" width="13" height="16" viewBox="0 0 13 16"><path d="M6.5 1.3L9.6 7H3.4Z" fill="#333"/><path d="M6.5 14.7L9.6 9H3.4Z" fill="#bbb"/></svg>
    <div class="abs" style="left:716px;top:16px;width:210px;height:341px;background:#fff;border-radius:3px;box-shadow:0 1px 3px rgba(0,0,0,0.25);overflow:hidden">
      <div class="abs" style="left:0;top:0;width:210px;height:34px;background:#f3f4f6"></div>
      <div class="t" style="left:12px;top:10px;font-size:13.6px;color:#2f3235;-webkit-text-stroke:0.2px #2f3235">Layer Legend</div>
      <svg class="abs" style="left:185px;top:10px" width="12" height="12" viewBox="0 0 16 16"><circle cx="8" cy="8" r="7.5" fill="#e3e4e6"/><path d="M8.5 2.6V7.5H13.4Z M7.5 13.4V8.5H2.6Z" fill="#2a2d31"/></svg>
      <div class="t" style="left:12px;top:43px;font-size:12.6px;color:#2f3235;letter-spacing:-0.35px;-webkit-text-stroke:0.2px #2f3235">Crash Layers</div>
      <div class="abs" style="left:17px;top:68px;width:7px;height:7px;border-radius:4px;background:#22b0b8"></div>
      <div class="t" style="left:38px;top:65px;font-size:14.5px;color:#2f3235">7,004</div><div class="t" style="left:78px;top:70.5px;font-size:8.8px;color:#2f3235">crashes</div>
      <div class="abs" style="left:17px;top:95px;width:7px;height:7px;border-radius:4px;background:#418ae0"></div>
      <div class="t" style="left:38px;top:92px;font-size:14.5px;color:#2f3235">529</div><div class="t" style="left:66px;top:97.5px;font-size:8.8px;color:#2f3235">crashes</div>
      <div class="abs" style="left:12px;top:118px;width:186px;height:1px;background:#e3e4e6"></div>
      <div class="t" style="left:12px;top:128px;font-size:13px;color:#2f3235;-webkit-text-stroke:0.2px #2f3235">Hotspots</div>
      <div class="abs" style="left:12px;top:157px;width:18px;height:3px;border-radius:1.5px;background:#e8437b"></div>
      <div class="t" style="left:38px;top:150px;font-size:14.5px;color:#2f3235">32</div>
      <div class="t" style="left:86px;top:150px;font-size:8.6px;color:#2f3235;line-height:9.3px">Top roads with more crashes<br>than expected</div>
      <div class="abs" style="left:14px;top:177px;width:14px;height:14px;border-radius:7px;background:#ef6a9a"></div>
      <div class="t" style="left:38px;top:177px;font-size:14.5px;color:#2f3235">100</div>
      <div class="t" style="left:86px;top:177px;font-size:8.6px;color:#2f3235;line-height:9.3px">Top intersections with more<br>crashes than expected</div>
      <div class="abs" style="left:12px;top:206px;width:186px;height:1px;background:#e3e4e6"></div>
      <div class="t" style="left:12px;top:216px;font-size:12.6px;color:#2f3235;letter-spacing:-0.2px;-webkit-text-stroke:0.2px #2f3235">Travel Data</div>
      <div class="t" style="left:12px;top:238px;font-size:8.9px;color:#2f3235;font-weight:bold;letter-spacing:-0.2px">Vehicle volume (in AADT)</div>
      <div class="abs" style="left:12px;top:262px;width:18px;height:2px;background:#6f60f2"></div>
      <div class="abs" style="left:12px;top:276px;width:18px;height:4px;background:#5a49d6"></div>
      <div class="abs" style="left:12px;top:290px;width:18px;height:6px;background:#4333b2"></div>
      <div class="abs" style="left:12px;top:305px;width:18px;height:8px;background:#2c1f82"></div>
      <div class="abs" style="left:12px;top:320px;width:18px;height:9px;background:#160b4e"></div>
      <div class="t" style="left:38px;top:259px;font-size:9.3px;color:#55585c;letter-spacing:-0.2px">1 - 5,000</div>
      <div class="t" style="left:38px;top:274px;font-size:9.3px;color:#55585c;letter-spacing:-0.2px">5,001 - 10,000</div>
      <div class="t" style="left:38px;top:289px;font-size:9.3px;color:#55585c;letter-spacing:-0.2px">10,001 - 20,000</div>
      <div class="t" style="left:38px;top:304px;font-size:9.3px;color:#55585c;letter-spacing:-0.2px">20,001 - 40,000</div>
      <div class="t" style="left:38px;top:319.5px;font-size:9.3px;color:#55585c;letter-spacing:-0.2px">&gt; 40,000</div>
    </div>
    <div class="abs" style="left:724.4px;top:413px;width:209px;height:15px;background:rgba(255,255,255,0.5)"></div>
    <div class="t" style="left:729px;top:416.5px;font-size:9.5px;color:#333;letter-spacing:-0.1px">© Mapbox © OpenStreetMap</div><div class="t" style="left:854.4px;top:416.5px;font-size:9.5px;color:#333;font-weight:bold;letter-spacing:-0.15px">Improve this map</div>
    <svg class="abs" style="left:0;top:405px" width="80" height="25" viewBox="0 0 80 25"><circle cx="12.5" cy="16.7" r="6.6" fill="#fff" stroke="#a2a2a2" stroke-width="1"/><circle cx="12.5" cy="16.7" r="4.6" fill="none" stroke="#a2a2a2" stroke-width="0.9"/><path d="M9.6 19.8 L10 16.3 A3 3 0 1 1 13.2 19.4 Z" fill="#a8a8a8"/><text x="22.3" y="20.5" font-size="13.5" font-weight="bold" fill="#fff" stroke="#a2a2a2" stroke-width="1.8" paint-order="stroke" font-family="Liberation Sans" textLength="47" lengthAdjust="spacingAndGlyphs">mapbox</text></svg>
  </div>
  <div id="list">
    <div class="abs" style="left:0;top:0;width:941px;height:37px;background:#f3f4f6;border-top:1px solid #d3d5d8"></div>
    <div class="t" style="left:400px;top:10px;font-size:18px;color:#2f3235;-webkit-text-stroke:0.3px #2f3235">Hotspot List View</div>
    <svg class="abs" style="left:903.6px;top:12.4px" width="16" height="16" viewBox="0 0 16 16"><circle cx="8" cy="8" r="8" fill="#e3e4e6"/><path d="M8.5 2.6V7.5H13.4Z M7.5 13.4V8.5H2.6Z" fill="#2a2d31"/></svg>
    <div class="t" style="left:15px;top:46px;font-size:14px;color:#2f3235;letter-spacing:0.15px">Intersection Hotspots</div>
    <div class="abs" style="left:15px;top:65px;width:136px;height:3px;background:#1e94e8"></div>
    <div class="t" style="left:181px;top:46px;font-size:14px;color:#55585c">Road Segment Hotspots</div>
    <svg class="abs" style="left:745.5px;top:49.5px" width="11" height="12" viewBox="0 0 11 12"><path d="M5.5 1V9M2 5.8L5.5 9.3L9 5.8M1.5 11H9.5" stroke="#2d8ff0" stroke-width="1.4" fill="none"/></svg>
    <div class="t" style="left:760px;top:49.5px;font-size:10.2px;color:#2d8ff0;font-weight:bold;letter-spacing:0.16px">EXPORT HOTSPOTS TO EXCEL</div>
    <div class="t" style="left:15px;top:83px;font-size:10.5px;color:#5b5e62;letter-spacing:0px;-webkit-text-stroke:0.25px #5b5e62">RANK</div>
    <div class="t" style="left:106px;top:83px;font-size:10.5px;color:#5b5e62;letter-spacing:0.1px;-webkit-text-stroke:0.25px #5b5e62">LOCATION</div>
    <div class="t" style="left:436px;top:83px;font-size:10.5px;color:#5b5e62;letter-spacing:0px;-webkit-text-stroke:0.25px #5b5e62">CRASH RATE</div>
    <div class="t" style="left:568px;top:83px;font-size:10.5px;color:#5b5e62;letter-spacing:0px;-webkit-text-stroke:0.25px #5b5e62">CRASH RATIO</div>
    <div class="t" style="left:715px;top:83px;font-size:10.5px;color:#5b5e62;letter-spacing:0px;-webkit-text-stroke:0.25px #5b5e62">CRASH COUNT</div>
    <div class="t" style="left:856px;top:83px;font-size:10.5px;color:#5b5e62;letter-spacing:-0.15px;-webkit-text-stroke:0.25px #5b5e62">SEE MORE</div>
    <svg class="abs" style="left:506px;top:81.5px" width="12" height="12" viewBox="0 0 12 12"><circle cx="6" cy="6" r="5.3" fill="none" stroke="#5b5e62" stroke-width="1"/><text x="6" y="9.1" font-size="8.8" text-anchor="middle" fill="#5b5e62" font-family="Liberation Sans">?</text></svg>
    <svg class="abs" style="left:642.7px;top:81.5px" width="12" height="12" viewBox="0 0 12 12"><circle cx="6" cy="6" r="5.3" fill="none" stroke="#5b5e62" stroke-width="1"/><text x="6" y="9.1" font-size="8.8" text-anchor="middle" fill="#5b5e62" font-family="Liberation Sans">?</text></svg>
    <div class="abs" style="left:15px;top:101px;width:915px;height:1px;background:#dcdde0"></div>
    <div class="t" style="left:29px;top:115px;font-size:12.5px;color:#3a3d41">1</div>
    <div class="t" style="left:107px;top:115px;font-size:12.5px;color:#3a3d41;letter-spacing:-0.3px">Greenfield Rd and Plymouth Rd</div>
    <div class="t" style="left:424px;width:100px;text-align:right;top:115px;font-size:12.5px;color:#3a3d41">0.73</div>
    <div class="t" style="left:562px;width:100px;text-align:right;top:115px;font-size:12.5px;color:#3a3d41">2.6</div>
    <div class="t" style="left:701px;width:100px;text-align:right;top:115px;font-size:12.5px;color:#3a3d41">13</div>
    <div class="abs" style="left:861px;top:111px;width:69px;height:23px;border:1px solid #3b9cf2;border-radius:2px"></div>
    <div class="t" style="left:862px;width:69px;text-align:center;top:117px;font-size:10.5px;color:#2d8ff0;font-weight:bold;letter-spacing:0.1px">DETAILS</div>
    <div class="t" style="left:29px;top:153px;font-size:12.5px;color:#3a3d41">2</div>
    <div class="t" style="left:107px;top:153px;font-size:12.5px;color:#3a3d41;letter-spacing:-0.3px">Grand River Ave and Greenfield Rd</div>
    <div class="t" style="left:424px;width:100px;text-align:right;top:153px;font-size:12.5px;color:#3a3d41">0.73</div>
    <div class="t" style="left:562px;width:100px;text-align:right;top:153px;font-size:12.5px;color:#3a3d41">2.5</div>
    <div class="t" style="left:701px;width:100px;text-align:right;top:153px;font-size:12.5px;color:#3a3d41">12</div>
    <div class="abs" style="left:861px;top:149px;width:69px;height:23px;border:1px solid #3b9cf2;border-radius:2px"></div>
    <div class="t" style="left:862px;width:69px;text-align:center;top:155px;font-size:10.5px;color:#2d8ff0;font-weight:bold;letter-spacing:0.1px">DETAILS</div>
    <div class="t" style="left:29px;top:191px;font-size:12.5px;color:#3a3d41">3</div>
    <div class="t" style="left:107px;top:191px;font-size:12.5px;color:#3a3d41;letter-spacing:-0.3px">McNichols Rd W and Meyers Rd</div>
    <div class="t" style="left:424px;width:100px;text-align:right;top:191px;font-size:12.5px;color:#3a3d41">0.99</div>
    <div class="t" style="left:562px;width:100px;text-align:right;top:191px;font-size:12.5px;color:#3a3d41">2.3</div>
    <div class="t" style="left:701px;width:100px;text-align:right;top:191px;font-size:12.5px;color:#3a3d41">11</div>
    <div class="abs" style="left:861px;top:187px;width:69px;height:23px;border:1px solid #3b9cf2;border-radius:2px"></div>
    <div class="t" style="left:862px;width:69px;text-align:center;top:193px;font-size:10.5px;color:#2d8ff0;font-weight:bold;letter-spacing:0.1px">DETAILS</div>
    <div class="t" style="left:29px;top:229px;font-size:12.5px;color:#3a3d41">4</div>
    <div class="t" style="left:107px;top:229px;font-size:12.5px;color:#3a3d41;letter-spacing:-0.3px">8 Mile Rd and Gratiot Ave</div>
    <div class="t" style="left:424px;width:100px;text-align:right;top:229px;font-size:12.5px;color:#3a3d41">0.75</div>
    <div class="t" style="left:562px;width:100px;text-align:right;top:229px;font-size:12.5px;color:#3a3d41">2.2</div>
    <div class="t" style="left:701px;width:100px;text-align:right;top:229px;font-size:12.5px;color:#3a3d41">11</div>
    <div class="abs" style="left:861px;top:225px;width:69px;height:23px;border:1px solid #3b9cf2;border-radius:2px"></div>
    <div class="t" style="left:862px;width:69px;text-align:center;top:231px;font-size:10.5px;color:#2d8ff0;font-weight:bold;letter-spacing:0.1px">DETAILS</div>
  </div>
  <div class="abs" style="left:0;top:0;width:1216px;height:736px;border:1px solid rgba(255,255,255,0.2);border-top-color:rgba(255,255,255,0.03);border-radius:0 0 5px 5px;pointer-events:none"></div>
</div>
</body></html>
